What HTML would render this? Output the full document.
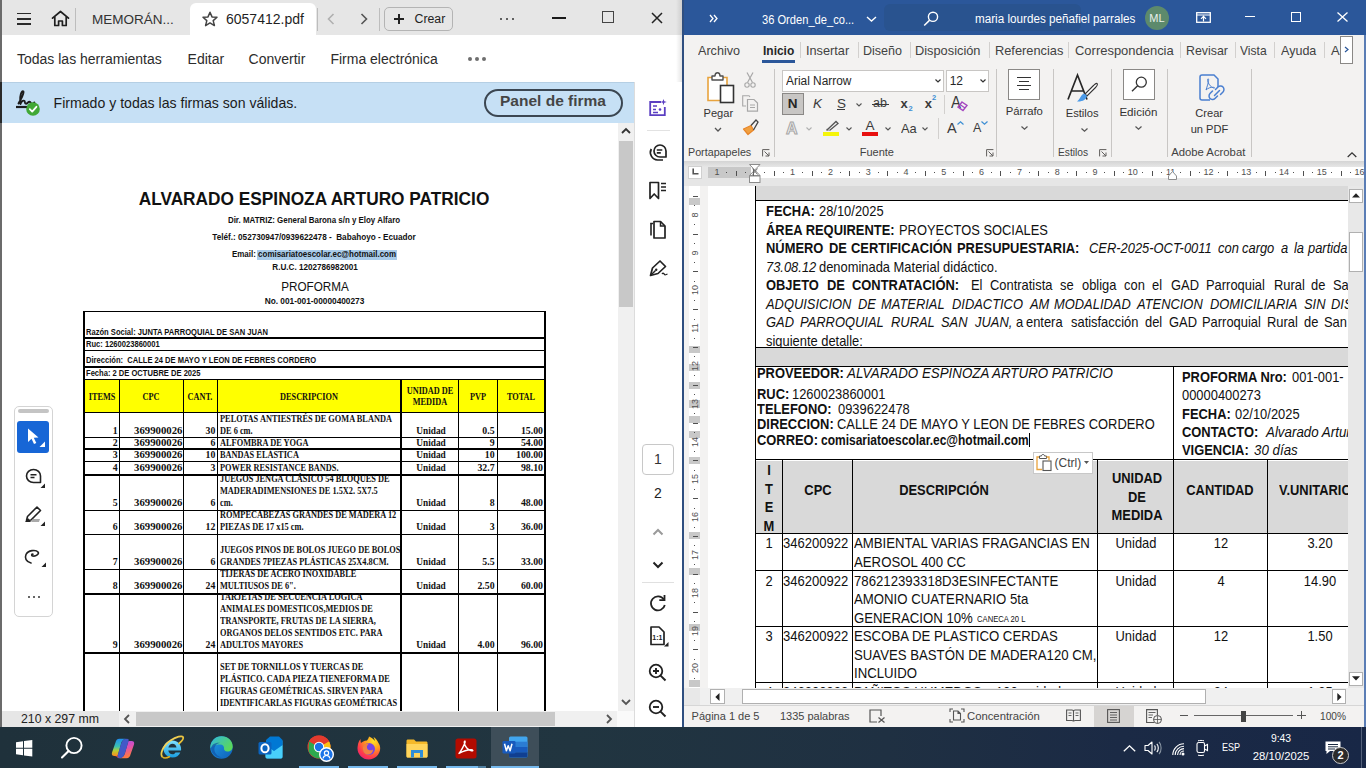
<!DOCTYPE html>
<html><head><meta charset="utf-8">
<style>
*{box-sizing:border-box;margin:0;padding:0}
html,body{width:1366px;height:768px;overflow:hidden;background:#fff;font-family:"Liberation Sans",sans-serif;position:relative}
.a{position:absolute}
.t{position:absolute;white-space:nowrap;line-height:1}
svg{position:absolute;overflow:visible}
#L{position:absolute;left:0;top:0;width:682px;height:727px;background:#fff;overflow:hidden}
#R{position:absolute;left:682px;top:0;width:684px;height:727px;background:#f3f2f1;overflow:hidden}
#TB{position:absolute;left:0;top:727px;width:1366px;height:41px;background:#1d2c39;overflow:hidden}
</style></head><body>
<div id="L">
<div class="a" style="left:0px;top:0px;width:682px;height:35px;background:#e6e6e6;"></div>
<div class="a" style="left:190px;top:3px;width:126px;height:32px;background:#fff;border-radius:6px 6px 0 0"></div>
<div class="a" style="left:0px;top:35px;width:682px;height:47px;background:#fff;"></div>
<div class="a" style="left:0px;top:82px;width:634px;height:41px;background:#c6e0f5;"></div>
<div class="a" style="left:0px;top:82px;width:634px;height:1px;background:#b5cfe4;"></div>
<div class="a" style="left:0px;top:0px;width:2px;height:727px;background:#6b6b6b;"></div>
<div class="a" style="left:0px;top:82px;width:2px;height:41px;background:#2a2a2a;"></div>
<div class="a" style="left:676px;top:0;width:6px;height:727px;background:linear-gradient(to right,rgba(0,0,0,0),rgba(0,0,0,0.10))"></div>
<div class="a" style="left:17px;top:12.75px;width:14px;height:1.6px;background:#2b2b2b;"></div>
<div class="a" style="left:17px;top:18.0px;width:14px;height:1.6px;background:#2b2b2b;"></div>
<div class="a" style="left:17px;top:23.25px;width:14px;height:1.6px;background:#2b2b2b;"></div>
<svg style="left:51px;top:10px" width="19" height="17" viewBox="0 0 19 17"><path d="M1.5 8.2 L9.5 1.5 L17.5 8.2 M3.8 6.6 V15.5 H7.6 V11 H11.4 V15.5 H15.2 V6.6" fill="none" stroke="#1f1f1f" stroke-width="1.7" stroke-linejoin="round" stroke-linecap="round"/></svg>
<div class="a" style="left:75px;top:8px;width:1px;height:23px;background:#bdbdbd;"></div>
<span class="t" style="left:92px;top:12.77px;font-size:13.5px;color:#333;">MEMORÁN...</span>
<svg style="left:202px;top:11px" width="16" height="16" viewBox="0 0 16 16"><path d="M8 1.2 L10 5.9 L15 6.3 L11.2 9.6 L12.4 14.6 L8 11.9 L3.6 14.6 L4.8 9.6 L1 6.3 L6 5.9 Z" fill="none" stroke="#444" stroke-width="1.5" stroke-linejoin="round"/></svg>
<span class="t" style="left:226px;top:12.35px;font-size:14px;color:#1f1f1f;">6057412.pdf</span>
<div class="a" style="left:317px;top:8px;width:1px;height:23px;background:#bdbdbd;"></div>
<svg style="left:327px;top:13px" width="8" height="12" viewBox="0 0 8 12"><path d="M6.5 1 L1.5 6 L6.5 11" fill="none" stroke="#b0b0b0" stroke-width="1.6"/></svg>
<svg style="left:360px;top:13px" width="8" height="12" viewBox="0 0 8 12"><path d="M1.5 1 L6.5 6 L1.5 11" fill="none" stroke="#555" stroke-width="1.6"/></svg>
<div class="a" style="left:379px;top:8px;width:1px;height:23px;background:#bdbdbd;"></div>
<div class="a" style="left:384px;top:7px;width:69px;height:24px;border:1px solid #b4b4b4;border-radius:5px"></div>
<div class="a" style="left:394px;top:18.2px;width:10px;height:1.6px;background:#222;"></div>
<div class="a" style="left:398.2px;top:14px;width:1.6px;height:10px;background:#222;"></div>
<span class="t" style="left:414.5px;top:12.79px;font-size:12.3px;color:#222;">Crear</span>
<div class="a" style="left:499.5px;top:17.5px;width:2px;height:2px;background:#333;border-radius:1px;"></div>
<div class="a" style="left:505.5px;top:17.5px;width:2px;height:2px;background:#333;border-radius:1px;"></div>
<div class="a" style="left:511.5px;top:17.5px;width:2px;height:2px;background:#333;border-radius:1px;"></div>
<div class="a" style="left:552px;top:17px;width:14px;height:2px;background:#1a1a1a;"></div>
<div class="a" style="left:602px;top:11px;width:12px;height:12px;border:1.6px solid #444"></div>
<svg style="left:651px;top:11.5px" width="12" height="12" viewBox="0 0 12 12"><path d="M1 1 L11 11 M11 1 L1 11" stroke="#222" stroke-width="1.5"/></svg>
<span class="t" style="left:17px;top:51.95px;font-size:14px;color:#2c2c2c;">Todas las herramientas</span>
<span class="t" style="left:187.6px;top:51.95px;font-size:14px;color:#2c2c2c;">Editar</span>
<span class="t" style="left:248.6px;top:51.95px;font-size:14px;color:#2c2c2c;">Convertir</span>
<span class="t" style="left:330.4px;top:51.95px;font-size:14px;color:#2c2c2c;">Firma electrónica</span>
<div class="a" style="left:468px;top:56.7px;width:4px;height:4px;background:#6e6e6e;border-radius:2px;"></div>
<div class="a" style="left:475px;top:56.7px;width:4px;height:4px;background:#6e6e6e;border-radius:2px;"></div>
<div class="a" style="left:482px;top:56.7px;width:4px;height:4px;background:#6e6e6e;border-radius:2px;"></div>
<svg style="left:14px;top:89px" width="30" height="28" viewBox="0 0 30 28"><path d="M4.5 14.5 C6.5 11 9.5 5.5 9.5 3.2 C9.5 1.8 8.3 2 7.5 3.5 C6.2 6 6 11 6.5 15 C7.2 12.5 8.8 11.2 10.3 11.8 C11.6 12.3 10 14.8 12 14.8 C13.5 14.8 14.2 12.3 15.8 12.8 C17.2 13.3 16.2 15 18.2 14.8 C19.2 14.7 19.8 14 20.3 13.5" fill="none" stroke="#1d1d1d" stroke-width="1.9" stroke-linecap="round" stroke-linejoin="round"/><path d="M2 18 H20" stroke="#1d1d1d" stroke-width="2.2"/><circle cx="19" cy="20" r="6.8" fill="#41a835"/><path d="M15.8 20.2 L18.2 22.6 L22.4 17.8" fill="none" stroke="#fff" stroke-width="1.8" stroke-linecap="round" stroke-linejoin="round"/></svg>
<span class="t" style="left:53.6px;top:96.06px;font-size:14.1px;color:#1b1b1b;">Firmado y todas las firmas son válidas.</span>
<div class="a" style="left:484px;top:89px;width:139px;height:28px;border:2px solid #3b4651;border-radius:14px"></div>
<span class="t" style="left:553px;top:93.48px;font-size:15.5px;font-weight:bold;color:#454545;transform:translateX(-50%) scaleX(1.0);transform-origin:50% 0;">Panel de firma</span>
<div class="a" style="left:634px;top:82px;width:48px;height:645px;background:#fff;"></div>
<div class="a" style="left:634px;top:82px;width:1px;height:645px;background:#dcdcdc;"></div>
<svg style="left:648px;top:98px" width="20" height="19" viewBox="0 0 20 19"><path d="M13 4 H2.2 V17.2 H16.8 V9" fill="none" stroke="#5b3fc2" stroke-width="1.8"/><path d="M5 8 H9 M5 11.5 H8 M5 14.5 H10" stroke="#5b3fc2" stroke-width="1.6"/><circle cx="12" cy="11.5" r="1.3" fill="#5b3fc2"/><path d="M15.5 1 L16.3 3.3 L18.8 4 L16.3 4.8 L15.5 7.2 L14.7 4.8 L12.3 4 L14.7 3.3 Z" fill="#5b3fc2"/></svg>
<div class="a" style="left:647px;top:130px;width:23px;height:1px;background:#e2e2e2;"></div>
<svg style="left:648px;top:143px" width="20" height="19" viewBox="0 0 20 19"><path d="M12 2 A6 6 0 1 0 12 14 H18 V8 A6 6 0 0 0 12 2 Z" fill="none" stroke="#222" stroke-width="1.7" stroke-linejoin="round"/><path d="M8.8 7 H14.3 M8.8 9.9 H12.8" stroke="#222" stroke-width="1.6"/><path d="M3.3 6 A7.5 7.5 0 0 0 9.5 17 H15" fill="none" stroke="#222" stroke-width="1.7"/></svg>
<svg style="left:648px;top:181px" width="20" height="19" viewBox="0 0 20 19"><path d="M2 1.5 H10.5 V17.5 L6.2 13 L2 17.5 Z" fill="none" stroke="#222" stroke-width="1.7" stroke-linejoin="round"/><path d="M13 2.5 H18 M13 6 H18 M13 9.5 H18" stroke="#222" stroke-width="1.5"/></svg>
<svg style="left:648px;top:220px" width="20" height="19" viewBox="0 0 20 19"><path d="M5 3.5 H3 V15.5" fill="none" stroke="#222" stroke-width="1.6"/><path d="M3 3.5 V4 M6 1.5 H12.5 L17 6 V18 H6 Z" fill="none" stroke="#222" stroke-width="1.7" stroke-linejoin="round"/><path d="M12.5 1.5 V6 H17" fill="none" stroke="#222" stroke-width="1.5"/></svg>
<svg style="left:648px;top:259px" width="21" height="19" viewBox="0 0 21 19"><path d="M12 2 L17.5 7.5 L10 14.5 L2.5 16.5 L4.5 9 Z" fill="none" stroke="#222" stroke-width="1.7" stroke-linejoin="round"/><path d="M2.5 16.5 L7.5 11.5" stroke="#222" stroke-width="1.5"/><circle cx="8.2" cy="10.8" r="1.2" fill="#222"/><path d="M14 15 C15 13.5 16 14.5 16.5 15.5 C17 16.5 18 15.5 19.5 15" fill="none" stroke="#222" stroke-width="1.3"/></svg>
<div class="a" style="left:642px;top:444px;width:32px;height:31px;border:1px solid #c8c8c8;border-radius:4px"></div>
<span class="t" style="left:658px;top:451.65px;font-size:14px;color:#333;transform:translateX(-50%) scaleX(1.0);transform-origin:50% 0;">1</span>
<span class="t" style="left:658px;top:486.15px;font-size:14px;color:#222;transform:translateX(-50%) scaleX(1.0);transform-origin:50% 0;">2</span>
<svg style="left:652px;top:528px" width="12" height="8" viewBox="0 0 12 8"><path d="M1.5 6.5 L6 2 L10.5 6.5" fill="none" stroke="#9a9a9a" stroke-width="2"/></svg>
<svg style="left:652px;top:561px" width="12" height="8" viewBox="0 0 12 8"><path d="M1.5 1.5 L6 6 L10.5 1.5" fill="none" stroke="#222" stroke-width="2"/></svg>
<div class="a" style="left:642px;top:582px;width:32px;height:1px;background:#e0e0e0;"></div>
<svg style="left:648px;top:593px" width="20" height="20" viewBox="0 0 20 20"><path d="M15.8 6.5 A7 7 0 1 0 16.8 12" fill="none" stroke="#222" stroke-width="1.8"/><path d="M16.5 2 V7.2 H11.3" fill="none" stroke="#222" stroke-width="1.8"/></svg>
<svg style="left:649px;top:626px" width="20" height="21" viewBox="0 0 20 21"><path d="M2 1 H10 L15 6 V18.5 H2 Z" fill="none" stroke="#222" stroke-width="1.7" stroke-linejoin="round"/><text x="3.3" y="14" font-family="Liberation Sans" font-size="7" font-weight="bold" fill="#222">1:1</text><path d="M19.5 16 V20.5 H15 Z" fill="#222"/></svg>
<svg style="left:648px;top:663px" width="20" height="20" viewBox="0 0 20 20"><circle cx="8" cy="8" r="6.3" fill="none" stroke="#222" stroke-width="1.8"/><path d="M12.6 12.6 L17.5 17.5" stroke="#222" stroke-width="2"/><path d="M5 8 H11 M8 5 V11" stroke="#222" stroke-width="1.9"/></svg>
<svg style="left:648px;top:699px" width="20" height="20" viewBox="0 0 20 20"><circle cx="8" cy="8" r="6.3" fill="none" stroke="#222" stroke-width="1.8"/><path d="M12.6 12.6 L17.5 17.5" stroke="#222" stroke-width="2"/><path d="M5 8 H11" stroke="#222" stroke-width="1.9"/></svg>
<div class="a" style="left:618px;top:123px;width:16px;height:588px;background:#f0f0f0;"></div>
<svg style="left:621px;top:127px" width="10" height="8" viewBox="0 0 10 8"><path d="M1 6 L5 2 L9 6" fill="none" stroke="#333" stroke-width="1.8"/></svg>
<div class="a" style="left:619px;top:140.5px;width:14px;height:166px;background:#c8c8c8;"></div>
<svg style="left:621px;top:698px" width="10" height="8" viewBox="0 0 10 8"><path d="M1 2 L5 6 L9 2" fill="none" stroke="#555" stroke-width="1.8"/></svg>
<div class="a" style="left:2px;top:711px;width:615px;height:16px;background:#f0f0f0;"></div>
<div class="a" style="left:2px;top:711px;width:117px;height:16px;background:#e6e6e6;"></div>
<span class="t" style="left:21px;top:712.99px;font-size:12.3px;color:#222;">210 x 297 mm</span>
<svg style="left:123px;top:714px" width="8" height="10" viewBox="0 0 8 10"><path d="M6 1 L2 5 L6 9" fill="none" stroke="#555" stroke-width="1.8"/></svg>
<div class="a" style="left:136px;top:712px;width:419px;height:14px;background:#c8c8c8;"></div>
<svg style="left:605px;top:714px" width="8" height="10" viewBox="0 0 8 10"><path d="M2 1 L6 5 L2 9" fill="none" stroke="#555" stroke-width="1.8"/></svg>
<div class="a" style="left:617px;top:711px;width:17px;height:16px;background:#fafafa;"></div>
<div class="a" style="left:2px;top:123px;width:616px;height:588px;overflow:hidden"><div class="a" style="left:-2px;top:-123px;width:682px;height:768px"><span class="t" style="left:314px;top:190.29px;font-size:18.8px;font-weight:bold;color:#111;transform:translateX(-50%) scaleX(0.92);transform-origin:50% 0;">ALVARADO ESPINOZA ARTURO PATRICIO</span>
<span class="t" style="left:314px;top:215.87px;font-size:8.3px;font-weight:bold;color:#111;transform:translateX(-50%) scaleX(0.955);transform-origin:50% 0;">Dir. MATRIZ: General Barona s/n y Eloy Alfaro</span>
<span class="t" style="left:314.4px;top:232.67px;font-size:8.3px;font-weight:bold;color:#111;transform:translateX(-50%) scaleX(0.985);transform-origin:50% 0;">Teléf.: 052730947/0939622478 -&nbsp; Babahoyo - Ecuador</span>
<div class="a" style="left:256.5px;top:249.5px;width:140.5px;height:10px;background:#a9cbe9;"></div>
<span class="t" style="left:314px;top:249.57px;font-size:8.3px;font-weight:bold;color:#111;transform:translateX(-50%) scaleX(0.96);transform-origin:50% 0;">Email: comisariatoescolar.ec@hotmail.com</span>
<span class="t" style="left:314.8px;top:262.57px;font-size:8.3px;font-weight:bold;color:#111;transform:translateX(-50%) scaleX(0.98);transform-origin:50% 0;">R.U.C. 1202786982001</span>
<span class="t" style="left:315px;top:280.40px;font-size:13px;color:#111;transform:translateX(-50%) scaleX(0.9);transform-origin:50% 0;">PROFORMA</span>
<span class="t" style="left:314.5px;top:296.97px;font-size:8.3px;font-weight:bold;color:#111;transform:translateX(-50%) scaleX(1.0);transform-origin:50% 0;">No. 001-001-00000400273</span>
<div class="a" style="left:83px;top:311px;width:462px;height:1.2px;background:#000;"></div>
<div class="a" style="left:83px;top:336.5px;width:462px;height:2px;background:#000;"></div>
<div class="a" style="left:83px;top:350px;width:462px;height:1px;background:#000;"></div>
<div class="a" style="left:83px;top:366px;width:462px;height:2px;background:#000;"></div>
<div class="a" style="left:83px;top:379px;width:462px;height:1.3px;background:#000;"></div>
<div class="a" style="left:83px;top:380px;width:462px;height:32px;background:#ffff00;"></div>
<div class="a" style="left:83px;top:412px;width:462px;height:1.3px;background:#000;"></div>
<div class="a" style="left:83px;top:436.5px;width:462px;height:1.2px;background:#000;"></div>
<div class="a" style="left:83px;top:448px;width:462px;height:2px;background:#000;"></div>
<div class="a" style="left:83px;top:461px;width:462px;height:1.2px;background:#000;"></div>
<div class="a" style="left:83px;top:473.5px;width:462px;height:2px;background:#000;"></div>
<div class="a" style="left:83px;top:509.5px;width:462px;height:1.2px;background:#000;"></div>
<div class="a" style="left:83px;top:533.5px;width:462px;height:1.2px;background:#000;"></div>
<div class="a" style="left:83px;top:568.5px;width:462px;height:1.2px;background:#000;"></div>
<div class="a" style="left:83px;top:593px;width:462px;height:2px;background:#000;"></div>
<div class="a" style="left:83px;top:652px;width:462px;height:2px;background:#000;"></div>
<div class="a" style="left:83px;top:311px;width:2px;height:400px;background:#000;"></div>
<div class="a" style="left:544px;top:311px;width:2px;height:400px;background:#000;"></div>
<div class="a" style="left:119px;top:379px;width:1.2px;height:332px;background:#000;"></div>
<div class="a" style="left:183px;top:379px;width:1.2px;height:332px;background:#000;"></div>
<div class="a" style="left:217.3px;top:379px;width:1.2px;height:332px;background:#000;"></div>
<div class="a" style="left:400px;top:379px;width:1.6px;height:332px;background:#000;"></div>
<div class="a" style="left:458px;top:379px;width:1.2px;height:332px;background:#000;"></div>
<div class="a" style="left:496.5px;top:379px;width:1.6px;height:332px;background:#000;"></div>
<span class="t" style="left:86px;top:329.06px;font-size:8.2px;font-weight:bold;color:#111;transform:scaleX(0.925);transform-origin:0 0;">Razón Social: JUNTA PARROQUIAL DE SAN JUAN</span>
<span class="t" style="left:86px;top:341.36px;font-size:8.2px;font-weight:bold;color:#111;transform:scaleX(0.925);transform-origin:0 0;">Ruc: 1260023860001</span>
<span class="t" style="left:86px;top:357.36px;font-size:8.2px;font-weight:bold;color:#111;transform:scaleX(0.925);transform-origin:0 0;">Dirección:&nbsp; CALLE 24 DE MAYO Y LEON DE FEBRES CORDERO</span>
<span class="t" style="left:86px;top:369.96px;font-size:8.2px;font-weight:bold;color:#111;transform:scaleX(0.925);transform-origin:0 0;">Fecha: 2 DE OCTUBRE DE 2025</span>
<span class="t" style="left:101.5px;top:391.96px;font-size:9.6px;font-weight:bold;color:#111;font-family:'Liberation Serif',serif;transform:translateX(-50%) scaleX(0.86);transform-origin:50% 0;">ITEMS</span>
<span class="t" style="left:151px;top:391.96px;font-size:9.6px;font-weight:bold;color:#111;font-family:'Liberation Serif',serif;transform:translateX(-50%) scaleX(0.86);transform-origin:50% 0;">CPC</span>
<span class="t" style="left:200.3px;top:391.96px;font-size:9.6px;font-weight:bold;color:#111;font-family:'Liberation Serif',serif;transform:translateX(-50%) scaleX(0.86);transform-origin:50% 0;">CANT.</span>
<span class="t" style="left:308.5px;top:391.96px;font-size:9.6px;font-weight:bold;color:#111;font-family:'Liberation Serif',serif;transform:translateX(-50%) scaleX(0.86);transform-origin:50% 0;">DESCRIPCION</span>
<span class="t" style="left:429.5px;top:385.96px;font-size:9.6px;font-weight:bold;color:#111;font-family:'Liberation Serif',serif;transform:translateX(-50%) scaleX(0.86);transform-origin:50% 0;">UNIDAD DE</span>
<span class="t" style="left:429.5px;top:396.96px;font-size:9.6px;font-weight:bold;color:#111;font-family:'Liberation Serif',serif;transform:translateX(-50%) scaleX(0.86);transform-origin:50% 0;">MEDIDA</span>
<span class="t" style="left:477.5px;top:391.96px;font-size:9.6px;font-weight:bold;color:#111;font-family:'Liberation Serif',serif;transform:translateX(-50%) scaleX(0.86);transform-origin:50% 0;">PVP</span>
<span class="t" style="left:520.5px;top:391.96px;font-size:9.6px;font-weight:bold;color:#111;font-family:'Liberation Serif',serif;transform:translateX(-50%) scaleX(0.86);transform-origin:50% 0;">TOTAL</span>
<span class="t" style="left:117.7px;top:425.59px;font-size:9.8px;font-weight:bold;color:#111;font-family:'Liberation Serif',serif;transform:translateX(-100%) scaleX(1.0);transform-origin:100% 0;">1</span>
<span class="t" style="left:133.8px;top:425.59px;font-size:9.8px;font-weight:bold;color:#111;font-family:'Liberation Serif',serif;transform:scaleX(1.1);transform-origin:0 0;">369900026</span>
<span class="t" style="left:215.4px;top:425.59px;font-size:9.8px;font-weight:bold;color:#111;font-family:'Liberation Serif',serif;transform:translateX(-100%) scaleX(1.0);transform-origin:100% 0;">30</span>
<span class="t" style="left:219.6px;top:413.59px;font-size:9.8px;font-weight:bold;color:#111;font-family:'Liberation Serif',serif;transform:scaleX(0.85);transform-origin:0 0;">PELOTAS ANTIESTRÉS DE GOMA BLANDA</span>
<span class="t" style="left:219.6px;top:425.59px;font-size:9.8px;font-weight:bold;color:#111;font-family:'Liberation Serif',serif;transform:scaleX(0.85);transform-origin:0 0;">DE 6 cm.</span>
<span class="t" style="left:430.5px;top:425.59px;font-size:9.8px;font-weight:bold;color:#111;font-family:'Liberation Serif',serif;transform:translateX(-50%) scaleX(0.95);transform-origin:50% 0;">Unidad</span>
<span class="t" style="left:494.6px;top:425.59px;font-size:9.8px;font-weight:bold;color:#111;font-family:'Liberation Serif',serif;transform:translateX(-100%) scaleX(1.0);transform-origin:100% 0;">0.5</span>
<span class="t" style="left:543px;top:425.59px;font-size:9.8px;font-weight:bold;color:#111;font-family:'Liberation Serif',serif;transform:translateX(-100%) scaleX(1.0);transform-origin:100% 0;">15.00</span>
<span class="t" style="left:117.7px;top:437.59px;font-size:9.8px;font-weight:bold;color:#111;font-family:'Liberation Serif',serif;transform:translateX(-100%) scaleX(1.0);transform-origin:100% 0;">2</span>
<span class="t" style="left:133.8px;top:437.59px;font-size:9.8px;font-weight:bold;color:#111;font-family:'Liberation Serif',serif;transform:scaleX(1.1);transform-origin:0 0;">369900026</span>
<span class="t" style="left:215.4px;top:437.59px;font-size:9.8px;font-weight:bold;color:#111;font-family:'Liberation Serif',serif;transform:translateX(-100%) scaleX(1.0);transform-origin:100% 0;">6</span>
<span class="t" style="left:219.6px;top:437.59px;font-size:9.8px;font-weight:bold;color:#111;font-family:'Liberation Serif',serif;transform:scaleX(0.85);transform-origin:0 0;">ALFOMBRA DE YOGA</span>
<span class="t" style="left:430.5px;top:437.59px;font-size:9.8px;font-weight:bold;color:#111;font-family:'Liberation Serif',serif;transform:translateX(-50%) scaleX(0.95);transform-origin:50% 0;">Unidad</span>
<span class="t" style="left:494.6px;top:437.59px;font-size:9.8px;font-weight:bold;color:#111;font-family:'Liberation Serif',serif;transform:translateX(-100%) scaleX(1.0);transform-origin:100% 0;">9</span>
<span class="t" style="left:543px;top:437.59px;font-size:9.8px;font-weight:bold;color:#111;font-family:'Liberation Serif',serif;transform:translateX(-100%) scaleX(1.0);transform-origin:100% 0;">54.00</span>
<span class="t" style="left:117.7px;top:449.99px;font-size:9.8px;font-weight:bold;color:#111;font-family:'Liberation Serif',serif;transform:translateX(-100%) scaleX(1.0);transform-origin:100% 0;">3</span>
<span class="t" style="left:133.8px;top:449.99px;font-size:9.8px;font-weight:bold;color:#111;font-family:'Liberation Serif',serif;transform:scaleX(1.1);transform-origin:0 0;">369900026</span>
<span class="t" style="left:215.4px;top:449.99px;font-size:9.8px;font-weight:bold;color:#111;font-family:'Liberation Serif',serif;transform:translateX(-100%) scaleX(1.0);transform-origin:100% 0;">10</span>
<span class="t" style="left:219.6px;top:449.99px;font-size:9.8px;font-weight:bold;color:#111;font-family:'Liberation Serif',serif;transform:scaleX(0.85);transform-origin:0 0;">BANDAS ELÁSTICA</span>
<span class="t" style="left:430.5px;top:449.99px;font-size:9.8px;font-weight:bold;color:#111;font-family:'Liberation Serif',serif;transform:translateX(-50%) scaleX(0.95);transform-origin:50% 0;">Unidad</span>
<span class="t" style="left:494.6px;top:449.99px;font-size:9.8px;font-weight:bold;color:#111;font-family:'Liberation Serif',serif;transform:translateX(-100%) scaleX(1.0);transform-origin:100% 0;">10</span>
<span class="t" style="left:543px;top:449.99px;font-size:9.8px;font-weight:bold;color:#111;font-family:'Liberation Serif',serif;transform:translateX(-100%) scaleX(1.0);transform-origin:100% 0;">100.00</span>
<span class="t" style="left:117.7px;top:462.59px;font-size:9.8px;font-weight:bold;color:#111;font-family:'Liberation Serif',serif;transform:translateX(-100%) scaleX(1.0);transform-origin:100% 0;">4</span>
<span class="t" style="left:133.8px;top:462.59px;font-size:9.8px;font-weight:bold;color:#111;font-family:'Liberation Serif',serif;transform:scaleX(1.1);transform-origin:0 0;">369900026</span>
<span class="t" style="left:215.4px;top:462.59px;font-size:9.8px;font-weight:bold;color:#111;font-family:'Liberation Serif',serif;transform:translateX(-100%) scaleX(1.0);transform-origin:100% 0;">3</span>
<span class="t" style="left:219.6px;top:462.59px;font-size:9.8px;font-weight:bold;color:#111;font-family:'Liberation Serif',serif;transform:scaleX(0.85);transform-origin:0 0;">POWER RESISTANCE BANDS.</span>
<span class="t" style="left:430.5px;top:462.59px;font-size:9.8px;font-weight:bold;color:#111;font-family:'Liberation Serif',serif;transform:translateX(-50%) scaleX(0.95);transform-origin:50% 0;">Unidad</span>
<span class="t" style="left:494.6px;top:462.59px;font-size:9.8px;font-weight:bold;color:#111;font-family:'Liberation Serif',serif;transform:translateX(-100%) scaleX(1.0);transform-origin:100% 0;">32.7</span>
<span class="t" style="left:543px;top:462.59px;font-size:9.8px;font-weight:bold;color:#111;font-family:'Liberation Serif',serif;transform:translateX(-100%) scaleX(1.0);transform-origin:100% 0;">98.10</span>
<span class="t" style="left:117.7px;top:497.99px;font-size:9.8px;font-weight:bold;color:#111;font-family:'Liberation Serif',serif;transform:translateX(-100%) scaleX(1.0);transform-origin:100% 0;">5</span>
<span class="t" style="left:133.8px;top:497.99px;font-size:9.8px;font-weight:bold;color:#111;font-family:'Liberation Serif',serif;transform:scaleX(1.1);transform-origin:0 0;">369900026</span>
<span class="t" style="left:215.4px;top:497.99px;font-size:9.8px;font-weight:bold;color:#111;font-family:'Liberation Serif',serif;transform:translateX(-100%) scaleX(1.0);transform-origin:100% 0;">6</span>
<span class="t" style="left:219.6px;top:473.99px;font-size:9.8px;font-weight:bold;color:#111;font-family:'Liberation Serif',serif;transform:scaleX(0.85);transform-origin:0 0;">JUEGOS JENGA CLÁSICO 54 BLOQUES DE</span>
<span class="t" style="left:219.6px;top:485.99px;font-size:9.8px;font-weight:bold;color:#111;font-family:'Liberation Serif',serif;transform:scaleX(0.85);transform-origin:0 0;">MADERADIMENSIONES DE 1.5X2. 5X7.5</span>
<span class="t" style="left:219.6px;top:497.99px;font-size:9.8px;font-weight:bold;color:#111;font-family:'Liberation Serif',serif;transform:scaleX(0.85);transform-origin:0 0;">cm.</span>
<span class="t" style="left:430.5px;top:497.99px;font-size:9.8px;font-weight:bold;color:#111;font-family:'Liberation Serif',serif;transform:translateX(-50%) scaleX(0.95);transform-origin:50% 0;">Unidad</span>
<span class="t" style="left:494.6px;top:497.99px;font-size:9.8px;font-weight:bold;color:#111;font-family:'Liberation Serif',serif;transform:translateX(-100%) scaleX(1.0);transform-origin:100% 0;">8</span>
<span class="t" style="left:543px;top:497.99px;font-size:9.8px;font-weight:bold;color:#111;font-family:'Liberation Serif',serif;transform:translateX(-100%) scaleX(1.0);transform-origin:100% 0;">48.00</span>
<span class="t" style="left:117.7px;top:522.09px;font-size:9.8px;font-weight:bold;color:#111;font-family:'Liberation Serif',serif;transform:translateX(-100%) scaleX(1.0);transform-origin:100% 0;">6</span>
<span class="t" style="left:133.8px;top:522.09px;font-size:9.8px;font-weight:bold;color:#111;font-family:'Liberation Serif',serif;transform:scaleX(1.1);transform-origin:0 0;">369900026</span>
<span class="t" style="left:215.4px;top:522.09px;font-size:9.8px;font-weight:bold;color:#111;font-family:'Liberation Serif',serif;transform:translateX(-100%) scaleX(1.0);transform-origin:100% 0;">12</span>
<span class="t" style="left:219.6px;top:510.09px;font-size:9.8px;font-weight:bold;color:#111;font-family:'Liberation Serif',serif;transform:scaleX(0.85);transform-origin:0 0;">ROMPECABEZAS GRANDES DE MADERA 12</span>
<span class="t" style="left:219.6px;top:522.09px;font-size:9.8px;font-weight:bold;color:#111;font-family:'Liberation Serif',serif;transform:scaleX(0.85);transform-origin:0 0;">PIEZAS DE 17 x15 cm.</span>
<span class="t" style="left:430.5px;top:522.09px;font-size:9.8px;font-weight:bold;color:#111;font-family:'Liberation Serif',serif;transform:translateX(-50%) scaleX(0.95);transform-origin:50% 0;">Unidad</span>
<span class="t" style="left:494.6px;top:522.09px;font-size:9.8px;font-weight:bold;color:#111;font-family:'Liberation Serif',serif;transform:translateX(-100%) scaleX(1.0);transform-origin:100% 0;">3</span>
<span class="t" style="left:543px;top:522.09px;font-size:9.8px;font-weight:bold;color:#111;font-family:'Liberation Serif',serif;transform:translateX(-100%) scaleX(1.0);transform-origin:100% 0;">36.00</span>
<span class="t" style="left:117.7px;top:557.09px;font-size:9.8px;font-weight:bold;color:#111;font-family:'Liberation Serif',serif;transform:translateX(-100%) scaleX(1.0);transform-origin:100% 0;">7</span>
<span class="t" style="left:133.8px;top:557.09px;font-size:9.8px;font-weight:bold;color:#111;font-family:'Liberation Serif',serif;transform:scaleX(1.1);transform-origin:0 0;">369900026</span>
<span class="t" style="left:215.4px;top:557.09px;font-size:9.8px;font-weight:bold;color:#111;font-family:'Liberation Serif',serif;transform:translateX(-100%) scaleX(1.0);transform-origin:100% 0;">6</span>
<span class="t" style="left:219.6px;top:545.09px;font-size:9.8px;font-weight:bold;color:#111;font-family:'Liberation Serif',serif;transform:scaleX(0.85);transform-origin:0 0;">JUEGOS PINOS DE BOLOS JUEGO DE BOLOS</span>
<span class="t" style="left:219.6px;top:557.09px;font-size:9.8px;font-weight:bold;color:#111;font-family:'Liberation Serif',serif;transform:scaleX(0.85);transform-origin:0 0;">GRANDES 7PIEZAS PLÁSTICAS 25X4.8CM.</span>
<span class="t" style="left:430.5px;top:557.09px;font-size:9.8px;font-weight:bold;color:#111;font-family:'Liberation Serif',serif;transform:translateX(-50%) scaleX(0.95);transform-origin:50% 0;">Unidad</span>
<span class="t" style="left:494.6px;top:557.09px;font-size:9.8px;font-weight:bold;color:#111;font-family:'Liberation Serif',serif;transform:translateX(-100%) scaleX(1.0);transform-origin:100% 0;">5.5</span>
<span class="t" style="left:543px;top:557.09px;font-size:9.8px;font-weight:bold;color:#111;font-family:'Liberation Serif',serif;transform:translateX(-100%) scaleX(1.0);transform-origin:100% 0;">33.00</span>
<span class="t" style="left:117.7px;top:581.09px;font-size:9.8px;font-weight:bold;color:#111;font-family:'Liberation Serif',serif;transform:translateX(-100%) scaleX(1.0);transform-origin:100% 0;">8</span>
<span class="t" style="left:133.8px;top:581.09px;font-size:9.8px;font-weight:bold;color:#111;font-family:'Liberation Serif',serif;transform:scaleX(1.1);transform-origin:0 0;">369900026</span>
<span class="t" style="left:215.4px;top:581.09px;font-size:9.8px;font-weight:bold;color:#111;font-family:'Liberation Serif',serif;transform:translateX(-100%) scaleX(1.0);transform-origin:100% 0;">24</span>
<span class="t" style="left:219.6px;top:569.09px;font-size:9.8px;font-weight:bold;color:#111;font-family:'Liberation Serif',serif;transform:scaleX(0.85);transform-origin:0 0;">TIJERAS DE ACERO INOXIDABLE</span>
<span class="t" style="left:219.6px;top:581.09px;font-size:9.8px;font-weight:bold;color:#111;font-family:'Liberation Serif',serif;transform:scaleX(0.85);transform-origin:0 0;">MULTIUSOS DE 6".</span>
<span class="t" style="left:430.5px;top:581.09px;font-size:9.8px;font-weight:bold;color:#111;font-family:'Liberation Serif',serif;transform:translateX(-50%) scaleX(0.95);transform-origin:50% 0;">Unidad</span>
<span class="t" style="left:494.6px;top:581.09px;font-size:9.8px;font-weight:bold;color:#111;font-family:'Liberation Serif',serif;transform:translateX(-100%) scaleX(1.0);transform-origin:100% 0;">2.50</span>
<span class="t" style="left:543px;top:581.09px;font-size:9.8px;font-weight:bold;color:#111;font-family:'Liberation Serif',serif;transform:translateX(-100%) scaleX(1.0);transform-origin:100% 0;">60.00</span>
<span class="t" style="left:117.7px;top:640.39px;font-size:9.8px;font-weight:bold;color:#111;font-family:'Liberation Serif',serif;transform:translateX(-100%) scaleX(1.0);transform-origin:100% 0;">9</span>
<span class="t" style="left:133.8px;top:640.39px;font-size:9.8px;font-weight:bold;color:#111;font-family:'Liberation Serif',serif;transform:scaleX(1.1);transform-origin:0 0;">369900026</span>
<span class="t" style="left:215.4px;top:640.39px;font-size:9.8px;font-weight:bold;color:#111;font-family:'Liberation Serif',serif;transform:translateX(-100%) scaleX(1.0);transform-origin:100% 0;">24</span>
<span class="t" style="left:219.6px;top:592.39px;font-size:9.8px;font-weight:bold;color:#111;font-family:'Liberation Serif',serif;transform:scaleX(0.85);transform-origin:0 0;">TARJETAS DE SECUENCIA LOGICA</span>
<span class="t" style="left:219.6px;top:604.39px;font-size:9.8px;font-weight:bold;color:#111;font-family:'Liberation Serif',serif;transform:scaleX(0.85);transform-origin:0 0;">ANIMALES DOMESTICOS,MEDIOS DE</span>
<span class="t" style="left:219.6px;top:616.39px;font-size:9.8px;font-weight:bold;color:#111;font-family:'Liberation Serif',serif;transform:scaleX(0.85);transform-origin:0 0;">TRANSPORTE, FRUTAS DE LA SIERRA,</span>
<span class="t" style="left:219.6px;top:628.39px;font-size:9.8px;font-weight:bold;color:#111;font-family:'Liberation Serif',serif;transform:scaleX(0.85);transform-origin:0 0;">ORGANOS DELOS SENTIDOS ETC. PARA</span>
<span class="t" style="left:219.6px;top:640.39px;font-size:9.8px;font-weight:bold;color:#111;font-family:'Liberation Serif',serif;transform:scaleX(0.85);transform-origin:0 0;">ADULTOS MAYORES</span>
<span class="t" style="left:430.5px;top:640.39px;font-size:9.8px;font-weight:bold;color:#111;font-family:'Liberation Serif',serif;transform:translateX(-50%) scaleX(0.95);transform-origin:50% 0;">Unidad</span>
<span class="t" style="left:494.6px;top:640.39px;font-size:9.8px;font-weight:bold;color:#111;font-family:'Liberation Serif',serif;transform:translateX(-100%) scaleX(1.0);transform-origin:100% 0;">4.00</span>
<span class="t" style="left:543px;top:640.39px;font-size:9.8px;font-weight:bold;color:#111;font-family:'Liberation Serif',serif;transform:translateX(-100%) scaleX(1.0);transform-origin:100% 0;">96.00</span>
<span class="t" style="left:219.6px;top:662.29px;font-size:9.8px;font-weight:bold;color:#111;font-family:'Liberation Serif',serif;transform:scaleX(0.85);transform-origin:0 0;">SET DE TORNILLOS Y TUERCAS DE</span>
<span class="t" style="left:219.6px;top:674.29px;font-size:9.8px;font-weight:bold;color:#111;font-family:'Liberation Serif',serif;transform:scaleX(0.85);transform-origin:0 0;">PLÁSTICO. CADA PIEZA TIENEFORMA DE</span>
<span class="t" style="left:219.6px;top:686.29px;font-size:9.8px;font-weight:bold;color:#111;font-family:'Liberation Serif',serif;transform:scaleX(0.85);transform-origin:0 0;">FIGURAS GEOMÉTRICAS. SIRVEN PARA</span>
<span class="t" style="left:219.6px;top:698.29px;font-size:9.8px;font-weight:bold;color:#111;font-family:'Liberation Serif',serif;transform:scaleX(0.85);transform-origin:0 0;">IDENTIFICARLAS FIGURAS GEOMÉTRICAS</span>
</div></div><div class="a" style="left:13.5px;top:405.5px;width:39.5px;height:211px;background:#fff;border:1px solid #d4d4d4;border-radius:5px"></div>
<div class="a" style="left:17.5px;top:408.5px;width:31px;height:4px;background:#c4c4c4;border-radius:2px;"></div>
<div class="a" style="left:17px;top:421px;width:32px;height:31.5px;background:#1766d6;border-radius:3px;"></div>
<svg style="left:26px;top:427px" width="20" height="22" viewBox="0 0 20 22"><path d="M2 1.5 V15 L5.5 11.8 L8 17 L10.3 16 L7.8 10.8 L12.5 10.5 Z" fill="#fff"/><path d="M19 14.5 V20 H13.5 Z" fill="#fff"/></svg>
<svg style="left:24px;top:467px" width="22" height="22" viewBox="0 0 22 22"><path d="M9.5 2.5 C5.5 2.5 2.5 5.5 2.5 9 C2.5 12.5 5.5 15.5 9.5 15.5 H16.5 V9 C16.5 5.5 13.5 2.5 9.5 2.5 Z" fill="none" stroke="#222" stroke-width="1.6" stroke-linejoin="round"/><path d="M6.5 7.8 H12.5 M6.5 10.6 H10.5" stroke="#222" stroke-width="1.5"/><path d="M21 16.5 V21 H16.5 Z" fill="#222"/></svg>
<svg style="left:22px;top:505px" width="24" height="22" viewBox="0 0 24 22"><path d="M15 2 L18.5 5.5 L9 15 L4.5 15.5 L5.5 11.5 Z" fill="none" stroke="#222" stroke-width="1.6" stroke-linejoin="round"/><path d="M3 17 L9 17 L6 13 Z" fill="#222"/><path d="M9 17 H17 L18 14 H11 Z" fill="#aaa"/><path d="M23 16.5 V21 H18.5 Z" fill="#222"/></svg>
<svg style="left:23px;top:546px" width="24" height="22" viewBox="0 0 24 22"><path d="M8 17 C3 16 1.5 12 3 8.5 C5 4 13 3.5 15 6 C16.5 8 13 10.5 10 10 C8 9.8 8.5 8 10 8.2" fill="none" stroke="#222" stroke-width="1.6" stroke-linecap="round"/><path d="M23 16.5 V21 H18.5 Z" fill="#222"/></svg>
<div class="a" style="left:27.5px;top:596px;width:2px;height:2px;background:#333;border-radius:1px;"></div>
<div class="a" style="left:32.5px;top:596px;width:2px;height:2px;background:#333;border-radius:1px;"></div>
<div class="a" style="left:37.5px;top:596px;width:2px;height:2px;background:#333;border-radius:1px;"></div>

</div>
<div id="R">
<div class="a" style="left:-682px;top:0;width:1366px;height:727px">
<div class="a" style="left:682px;top:0px;width:684px;height:35px;background:#2b579a;"></div>
<div class="a" style="left:682px;top:35px;width:684px;height:126px;background:#f3f2f1;"></div>
<div class="a" style="left:682px;top:0px;width:2px;height:727px;background:#2f4f80;"></div>
<div class="a" style="left:1364px;top:35px;width:2px;height:692px;background:#5a7db5;"></div>
<div class="a" style="left:884px;top:4px;width:197px;height:27px;border-radius:6px;background:#29538f"></div>
<svg style="left:709px;top:14px" width="9" height="9" viewBox="0 0 9 9"><path d="M1 1 L4 4.5 L1 8 M5 1 L8 4.5 L5 8" fill="none" stroke="#fff" stroke-width="1.3"/></svg>
<span class="t" style="left:762px;top:14.04px;font-size:12px;color:#fff;transform:scaleX(0.927);transform-origin:0 0;">36 Orden_de_co...</span>
<svg style="left:866px;top:16px" width="11" height="6" viewBox="0 0 11 6"><path d="M1 1 L5.5 5 L10 1" fill="none" stroke="#fff" stroke-width="1.4"/></svg>
<svg style="left:923px;top:11px" width="16" height="15" viewBox="0 0 16 15"><circle cx="10" cy="5.8" r="4.6" fill="none" stroke="#fff" stroke-width="1.4"/><path d="M6.7 9.1 L1.2 14.5" stroke="#fff" stroke-width="1.5"/></svg>
<span class="t" style="left:975.4px;top:13.04px;font-size:12px;color:#fff;transform:scaleX(0.973);transform-origin:0 0;">maria lourdes peñafiel parrales</span>
<div class="a" style="left:1145px;top:6px;width:24px;height:24px;border-radius:12px;background:#5d8a6c"></div>
<span class="t" style="left:1157px;top:12.99px;font-size:11px;color:#e8f0ea;transform:translateX(-50%) scaleX(1.0);transform-origin:50% 0;">ML</span>
<svg style="left:1196px;top:12px" width="15" height="11" viewBox="0 0 15 11"><rect x="0.7" y="0.7" width="13.6" height="9.6" fill="none" stroke="#fff" stroke-width="1.3"/><path d="M0.7 3 H14.3 M7.5 9.5 V4.5 M5 6.8 L7.5 4.3 L10 6.8" fill="none" stroke="#fff" stroke-width="1.2"/></svg>
<div class="a" style="left:1245px;top:16px;width:10px;height:1.3px;background:#fff;"></div>
<div class="a" style="left:1291px;top:12px;width:10px;height:10px;border:1.3px solid #fff"></div>
<svg style="left:1337px;top:12px" width="11" height="10" viewBox="0 0 11 10"><path d="M0.5 0.5 L10.5 9.5 M10.5 0.5 L0.5 9.5" stroke="#fff" stroke-width="1.3"/></svg>
<span class="t" style="left:698.3px;top:43.90px;font-size:13px;color:#424242;transform:scaleX(0.97);transform-origin:0 0;">Archivo</span>
<span class="t" style="left:762.5px;top:43.90px;font-size:13px;font-weight:bold;color:#262626;transform:scaleX(0.92);transform-origin:0 0;">Inicio</span>
<div class="a" style="left:762px;top:60px;width:33px;height:3px;background:#2b579a;"></div>
<span class="t" style="left:806.4px;top:43.90px;font-size:13px;color:#424242;transform:scaleX(0.98);transform-origin:0 0;">Insertar</span>
<span class="t" style="left:863.3px;top:43.90px;font-size:13px;color:#424242;transform:scaleX(0.965);transform-origin:0 0;">Diseño</span>
<span class="t" style="left:915.2px;top:43.90px;font-size:13px;color:#424242;transform:scaleX(0.985);transform-origin:0 0;">Disposición</span>
<span class="t" style="left:994.6px;top:43.90px;font-size:13px;color:#424242;transform:scaleX(0.985);transform-origin:0 0;">Referencias</span>
<span class="t" style="left:1074.5px;top:43.90px;font-size:13px;color:#424242;transform:scaleX(0.997);transform-origin:0 0;">Correspondencia</span>
<span class="t" style="left:1186px;top:43.90px;font-size:13px;color:#424242;transform:scaleX(0.95);transform-origin:0 0;">Revisar</span>
<span class="t" style="left:1240.3px;top:43.90px;font-size:13px;color:#424242;transform:scaleX(0.93);transform-origin:0 0;">Vista</span>
<span class="t" style="left:1280.9px;top:43.90px;font-size:13px;color:#424242;transform:scaleX(0.965);transform-origin:0 0;">Ayuda</span>
<span class="t" style="left:1331px;top:43.90px;font-size:13px;color:#424242;">A</span>
<div class="a" style="left:799.8px;top:42px;width:1px;height:16px;background:#d2d0ce;"></div>
<div class="a" style="left:857.8px;top:42px;width:1px;height:16px;background:#d2d0ce;"></div>
<div class="a" style="left:909.5px;top:42px;width:1px;height:16px;background:#d2d0ce;"></div>
<div class="a" style="left:988.7px;top:42px;width:1px;height:16px;background:#d2d0ce;"></div>
<div class="a" style="left:1067.6px;top:42px;width:1px;height:16px;background:#d2d0ce;"></div>
<div class="a" style="left:1180.3px;top:42px;width:1px;height:16px;background:#d2d0ce;"></div>
<div class="a" style="left:1234.8px;top:42px;width:1px;height:16px;background:#d2d0ce;"></div>
<div class="a" style="left:1274px;top:42px;width:1px;height:16px;background:#d2d0ce;"></div>
<div class="a" style="left:1324px;top:42px;width:1px;height:16px;background:#d2d0ce;"></div>
<div class="a" style="left:1340px;top:36px;width:13px;height:28px;background:#fff;border:1px solid #8a8886"></div>
<svg style="left:1344px;top:46px" width="5" height="7" viewBox="0 0 5 7"><path d="M1 1 L4 3.5 L1 6" fill="none" stroke="#2b579a" stroke-width="1.2"/></svg>
<svg style="left:706px;top:72px" width="30" height="32" viewBox="0 0 30 32"><path d="M7 5.5 H2 V28.5 H21 V5.5 H16" fill="#fff" stroke="#e8a33d" stroke-width="1.6"/><path d="M6 8 V4 H9 C9 1.5 10.2 0.8 11.5 0.8 C12.8 0.8 14 1.5 14 4 H17 V8 Z" fill="#fff" stroke="#505050" stroke-width="1.4" stroke-linejoin="round"/><rect x="14.5" y="13.5" width="13" height="17" fill="#fff" stroke="#333" stroke-width="1.6"/></svg>
<span class="t" style="left:703.5px;top:108.30px;font-size:11.1px;color:#333;">Pegar</span>
<svg style="left:714px;top:127px" width="8" height="5" viewBox="0 0 8 5"><path d="M1 1 L4 4 L7 1" fill="none" stroke="#555" stroke-width="1.3"/></svg>
<svg style="left:744px;top:72px" width="12" height="16" viewBox="0 0 12 16"><path d="M3 0.5 L8.5 10.5 M9 0.5 L3.5 10.5" stroke="#a8a8a8" stroke-width="1.2"/><circle cx="3" cy="13" r="2.2" fill="none" stroke="#a8a8a8" stroke-width="1.1"/><circle cx="9" cy="13" r="2.2" fill="none" stroke="#a8a8a8" stroke-width="1.1"/></svg>
<svg style="left:742px;top:95px" width="17" height="17" viewBox="0 0 17 17"><path d="M4 11 H0.7 V0.7 H7 L8 2" fill="none" stroke="#a8a8a8" stroke-width="1.1"/><path d="M5.5 4.5 H12 L15.5 8 V16.2 H5.5 Z" fill="none" stroke="#a8a8a8" stroke-width="1.2"/><path d="M8 10 H13 M8 12.5 H13" stroke="#a8a8a8" stroke-width="1"/></svg>
<svg style="left:742px;top:119px" width="17" height="16" viewBox="0 0 17 16"><path d="M1.5 10 L9 6.5 L11.5 11 L6 15.5 Z" fill="#f0a040" stroke="#e8862a" stroke-width="1.2" stroke-linejoin="round"/><path d="M9 6.5 L14 1 L16 3 L11.5 11" fill="none" stroke="#444" stroke-width="1.3"/></svg>
<span class="t" style="left:688px;top:147.09px;font-size:11px;color:#424242;transform:scaleX(0.975);transform-origin:0 0;">Portapapeles</span>
<svg style="left:762px;top:149px" width="8" height="8" viewBox="0 0 8 8"><path d="M0.6 7.4 V0.6 H7.4" fill="none" stroke="#605e5c" stroke-width="1"/><path d="M2.5 2.5 L7 7 M3.5 7 H7 V3.5" fill="none" stroke="#605e5c" stroke-width="1"/></svg>
<div class="a" style="left:773.6px;top:69px;width:1px;height:88px;background:#c8c6c4;"></div>
<div class="a" style="left:996.3px;top:69px;width:1px;height:88px;background:#c8c6c4;"></div>
<div class="a" style="left:1052.7px;top:69px;width:1px;height:88px;background:#c8c6c4;"></div>
<div class="a" style="left:1110.6px;top:69px;width:1px;height:88px;background:#c8c6c4;"></div>
<div class="a" style="left:1167.3px;top:69px;width:1px;height:88px;background:#c8c6c4;"></div>
<div class="a" style="left:1251.3px;top:69px;width:1px;height:88px;background:#c8c6c4;"></div>
<div class="a" style="left:782px;top:69.5px;width:162px;height:22px;background:#fff;border:1px solid #c8c6c4"></div>
<span class="t" style="left:785.5px;top:74.64px;font-size:12px;color:#262626;transform:scaleX(0.99);transform-origin:0 0;">Arial Narrow</span>
<svg style="left:935px;top:79px" width="6" height="4" viewBox="0 0 6 4"><path d="M0.5 0.5 L3 3 L5.5 0.5" fill="none" stroke="#333" stroke-width="1.2"/></svg>
<div class="a" style="left:946px;top:69.5px;width:43px;height:22px;background:#fff;border:1px solid #c8c6c4"></div>
<span class="t" style="left:949.7px;top:74.64px;font-size:12px;color:#262626;">12</span>
<svg style="left:979.5px;top:79px" width="6" height="4" viewBox="0 0 6 4"><path d="M0.5 0.5 L3 3 L5.5 0.5" fill="none" stroke="#333" stroke-width="1.2"/></svg>
<div class="a" style="left:782px;top:93.3px;width:22px;height:22px;background:#c8c6c4;border:1px solid #8a8886"></div>
<span class="t" style="left:787.8px;top:96.77px;font-size:13.5px;font-weight:bold;color:#252525;">N</span>
<span class="t" style="left:813px;top:96.77px;font-size:13.5px;font-style:italic;color:#3b3b3b;">K</span>
<span class="t" style="left:837px;top:96.57px;font-size:13.5px;color:#3b3b3b;">S</span>
<div class="a" style="left:837px;top:109.3px;width:8px;height:1.2px;background:#3b3b3b;"></div>
<svg style="left:855.5px;top:103px" width="6" height="4" viewBox="0 0 6 4"><path d="M0.5 0.5 L3 3 L5.5 0.5" fill="none" stroke="#555" stroke-width="1.1"/></svg>
<span class="t" style="left:873px;top:97.02px;font-size:12.5px;color:#3b3b3b;">ab</span>
<div class="a" style="left:871.5px;top:104.3px;width:17px;height:1px;background:#3b3b3b;"></div>
<span class="t" style="left:900.6px;top:97.20px;font-size:13px;font-weight:bold;color:#3b3b3b;">x</span>
<span class="t" style="left:908.5px;top:105.15px;font-size:7.5px;font-weight:bold;color:#3d8fd4;">2</span>
<span class="t" style="left:924.7px;top:97.20px;font-size:13px;font-weight:bold;color:#3b3b3b;">x</span>
<span class="t" style="left:932px;top:93.85px;font-size:7.5px;font-weight:bold;color:#3d8fd4;">2</span>
<div class="a" style="left:943.6px;top:94.6px;width:1px;height:19.4px;background:#d2d0ce;"></div>
<span class="t" style="left:951px;top:94.03px;font-size:16.5px;color:#3b3b3b;transform:scaleX(0.9);transform-origin:0 0;">A</span>
<svg style="left:957px;top:101px" width="11" height="10" viewBox="0 0 11 10"><path d="M5 1 L10 4.5 L6 9.5 L1 6 Z" fill="none" stroke="#a345c0" stroke-width="1.4"/><path d="M3 3.5 L8 7" stroke="#a345c0" stroke-width="1.2"/></svg>
<span class="t" style="left:786px;top:120.76px;font-size:16px;font-weight:bold;color:#f3f2f1;-webkit-text-stroke:1px #a6a6a6;">A</span>
<svg style="left:806px;top:127px" width="6" height="4" viewBox="0 0 6 4"><path d="M0.5 0.5 L3 3 L5.5 0.5" fill="none" stroke="#b0b0b0" stroke-width="1.1"/></svg>
<svg style="left:823px;top:120px" width="16" height="11" viewBox="0 0 16 11"><path d="M4 10 L13 1.5 L15 3.5 L6.5 10.5" fill="none" stroke="#555" stroke-width="1.3"/><path d="M3 10.5 L6 10.5 L4 8.5 Z" fill="#555"/></svg>
<div class="a" style="left:822.8px;top:132px;width:16.3px;height:4px;background:#f5f50a;"></div>
<svg style="left:846px;top:127px" width="6" height="4" viewBox="0 0 6 4"><path d="M0.5 0.5 L3 3 L5.5 0.5" fill="none" stroke="#555" stroke-width="1.1"/></svg>
<span class="t" style="left:865.5px;top:119.07px;font-size:13.5px;color:#3b3b3b;">A</span>
<div class="a" style="left:862.3px;top:132.3px;width:15.7px;height:3.3px;background:#e81010;"></div>
<svg style="left:885px;top:127px" width="6" height="4" viewBox="0 0 6 4"><path d="M0.5 0.5 L3 3 L5.5 0.5" fill="none" stroke="#555" stroke-width="1.1"/></svg>
<span class="t" style="left:901.2px;top:121.57px;font-size:13.5px;color:#3b3b3b;transform:scaleX(0.95);transform-origin:0 0;">Aa</span>
<svg style="left:922px;top:127px" width="6" height="4" viewBox="0 0 6 4"><path d="M0.5 0.5 L3 3 L5.5 0.5" fill="none" stroke="#555" stroke-width="1.1"/></svg>
<div class="a" style="left:938.4px;top:118px;width:1px;height:21px;background:#d2d0ce;"></div>
<span class="t" style="left:947px;top:120.73px;font-size:14.5px;color:#3b3b3b;">A</span>
<svg style="left:957px;top:121px" width="7" height="4" viewBox="0 0 7 4"><path d="M0.5 3.5 L3.5 0.7 L6.5 3.5" fill="none" stroke="#3d8fd4" stroke-width="1.2"/></svg>
<span class="t" style="left:973px;top:122.42px;font-size:12.5px;color:#3b3b3b;">A</span>
<svg style="left:981px;top:121px" width="7" height="4" viewBox="0 0 7 4"><path d="M0.5 0.5 L3.5 3.3 L6.5 0.5" fill="none" stroke="#3d8fd4" stroke-width="1.2"/></svg>
<span class="t" style="left:859.7px;top:147.09px;font-size:11px;color:#424242;">Fuente</span>
<svg style="left:985.5px;top:149px" width="8" height="8" viewBox="0 0 8 8"><path d="M0.6 7.4 V0.6 H7.4" fill="none" stroke="#605e5c" stroke-width="1"/><path d="M2.5 2.5 L7 7 M3.5 7 H7 V3.5" fill="none" stroke="#605e5c" stroke-width="1"/></svg>
<div class="a" style="left:1008px;top:69px;width:32px;height:31px;background:#fff;border:1px solid #8a8886"></div>
<div class="a" style="left:1017px;top:76.9px;width:14px;height:1.1px;background:#333;"></div>
<div class="a" style="left:1019px;top:81.0px;width:10px;height:1.1px;background:#333;"></div>
<div class="a" style="left:1017px;top:84.9px;width:14px;height:1.1px;background:#333;"></div>
<div class="a" style="left:1019px;top:89.1px;width:10px;height:1.1px;background:#333;"></div>
<span class="t" style="left:1005.8px;top:106.13px;font-size:11.3px;color:#333;">Párrafo</span>
<svg style="left:1021px;top:126px" width="7" height="4" viewBox="0 0 7 4"><path d="M0.5 0.5 L3.5 3.3 L6.5 0.5" fill="none" stroke="#555" stroke-width="1.2"/></svg>
<svg style="left:1067px;top:74px" width="22" height="26" viewBox="0 0 22 26"><path d="M1 25.5 L10.5 1 L20 25.5 M4.5 17 H16.5" fill="none" stroke="#262626" stroke-width="1.7"/></svg>
<svg style="left:1075px;top:82px" width="24" height="21" viewBox="0 0 24 21"><path d="M22 1.5 C23 2.5 22 4 20.5 5.5 L12 14 L10 12 L18.5 3.5 C20 2 21 0.8 22 1.5 Z" fill="#fff" stroke="#333" stroke-width="1.1"/><path d="M10 12 L12 14 C11 17.5 8 19.8 2 19.5 C4.5 17.5 5 15.5 6.5 13.5 C7.5 12 9 11.5 10 12 Z" fill="#4b9ae8"/></svg>
<span class="t" style="left:1065.7px;top:108.32px;font-size:11.2px;color:#333;">Estilos</span>
<svg style="left:1081px;top:128px" width="7" height="4" viewBox="0 0 7 4"><path d="M0.5 0.5 L3.5 3.3 L6.5 0.5" fill="none" stroke="#555" stroke-width="1.2"/></svg>
<span class="t" style="left:1057.5px;top:147.09px;font-size:11px;color:#424242;transform:scaleX(0.93);transform-origin:0 0;">Estilos</span>
<svg style="left:1099px;top:149px" width="8" height="8" viewBox="0 0 8 8"><path d="M0.6 7.4 V0.6 H7.4" fill="none" stroke="#605e5c" stroke-width="1"/><path d="M2.5 2.5 L7 7 M3.5 7 H7 V3.5" fill="none" stroke="#605e5c" stroke-width="1"/></svg>
<div class="a" style="left:1123px;top:69px;width:32px;height:31px;background:#fff;border:1px solid #8a8886"></div>
<svg style="left:1131px;top:76px" width="17" height="17" viewBox="0 0 17 17"><circle cx="10.3" cy="6.2" r="5" fill="none" stroke="#333" stroke-width="1.3"/><path d="M6.6 9.8 L1 15.3" stroke="#333" stroke-width="1.4"/></svg>
<span class="t" style="left:1119.4px;top:105.78px;font-size:11.6px;color:#333;">Edición</span>
<svg style="left:1135px;top:126px" width="7" height="4" viewBox="0 0 7 4"><path d="M0.5 0.5 L3.5 3.3 L6.5 0.5" fill="none" stroke="#555" stroke-width="1.2"/></svg>
<svg style="left:1199px;top:74px" width="27" height="29" viewBox="0 0 27 29"><path d="M3 1 H15 L19 5 V13 M11 26 H3 C2 26 1 25 1 24 V3 C1 2 2 1 3 1" fill="none" stroke="#4a7fd0" stroke-width="1.5"/><path d="M7 16 C9 10 10 6 9.5 5 C9 4 8 5.5 9 8 C10 11 12 13 14.5 14 C16 14.5 16 13.5 14.5 13.3 C12 13 9 14 7 16 Z" fill="none" stroke="#4a7fd0" stroke-width="1"/><path d="M16.5 15.5 L19 13 C20.5 11.5 23 12 24 13 C25 14 25.5 16.5 24 18 L21.5 20.5 M18.5 22 L16 24.5 C14.5 26 12 25.5 11 24.5 C10 23.5 9.5 21 11 19.5 L13.5 17 M15.5 21.5 L20.5 16.5" fill="none" stroke="#4a7fd0" stroke-width="1.5" stroke-linecap="round"/></svg>
<span class="t" style="left:1195.3px;top:108.30px;font-size:11.1px;color:#333;">Crear</span>
<span class="t" style="left:1190.7px;top:124.20px;font-size:11.1px;color:#333;">un PDF</span>
<span class="t" style="left:1171.2px;top:146.83px;font-size:11.3px;color:#424242;">Adobe Acrobat</span>
<svg style="left:1346.5px;top:152px" width="10" height="6" viewBox="0 0 10 6"><path d="M0.7 5 L5 0.8 L9.3 5" fill="none" stroke="#333" stroke-width="1.2"/></svg>
<div class="a" style="left:684px;top:161px;width:680px;height:6px;background:linear-gradient(#d4d4d4,#e6e6e6)"></div>
<div class="a" style="left:684px;top:167px;width:680px;height:19px;background:#e6e6e6;"></div>
<div class="a" style="left:688px;top:165.5px;width:14px;height:13px;background:#fff;border:1px solid #d0d0d0"></div>
<svg style="left:692px;top:168px" width="7" height="7" viewBox="0 0 7 7"><path d="M1.2 0.5 V5.8 H6.5" fill="none" stroke="#555" stroke-width="1.6"/></svg>
<div class="a" style="left:708px;top:167px;width:656px;height:10.5px;background:#fff;"></div>
<div class="a" style="left:708px;top:167px;width:43px;height:10.5px;background:#c8c8c8;"></div>
<span class="t" style="left:717.0px;top:167.98px;font-size:9px;color:#505050;transform:translateX(-50%) scaleX(1.0);transform-origin:50% 0;">1</span>
<div class="a" style="left:725.5px;top:172px;width:1px;height:1.2px;background:#505050;"></div>
<div class="a" style="left:735.5px;top:170.5px;width:1px;height:5px;background:#505050;"></div>
<div class="a" style="left:744.5px;top:172px;width:1px;height:1.2px;background:#505050;"></div>
<div class="a" style="left:763.5px;top:172px;width:1px;height:1.2px;background:#505050;"></div>
<div class="a" style="left:773.5px;top:170.5px;width:1px;height:5px;background:#505050;"></div>
<div class="a" style="left:782.5px;top:172px;width:1px;height:1.2px;background:#505050;"></div>
<span class="t" style="left:792.5999999999999px;top:167.98px;font-size:9px;color:#505050;transform:translateX(-50%) scaleX(1.0);transform-origin:50% 0;">1</span>
<div class="a" style="left:801.5px;top:172px;width:1px;height:1.2px;background:#505050;"></div>
<div class="a" style="left:811.5px;top:170.5px;width:1px;height:5px;background:#505050;"></div>
<div class="a" style="left:820.5px;top:172px;width:1px;height:1.2px;background:#505050;"></div>
<span class="t" style="left:830.4px;top:167.98px;font-size:9px;color:#505050;transform:translateX(-50%) scaleX(1.0);transform-origin:50% 0;">2</span>
<div class="a" style="left:839.5px;top:172px;width:1px;height:1.2px;background:#505050;"></div>
<div class="a" style="left:848.5px;top:170.5px;width:1px;height:5px;background:#505050;"></div>
<div class="a" style="left:858.5px;top:172px;width:1px;height:1.2px;background:#505050;"></div>
<span class="t" style="left:868.1999999999999px;top:167.98px;font-size:9px;color:#505050;transform:translateX(-50%) scaleX(1.0);transform-origin:50% 0;">3</span>
<div class="a" style="left:877.5px;top:172px;width:1px;height:1.2px;background:#505050;"></div>
<div class="a" style="left:886.5px;top:170.5px;width:1px;height:5px;background:#505050;"></div>
<div class="a" style="left:896.5px;top:172px;width:1px;height:1.2px;background:#505050;"></div>
<span class="t" style="left:906.0px;top:167.98px;font-size:9px;color:#505050;transform:translateX(-50%) scaleX(1.0);transform-origin:50% 0;">4</span>
<div class="a" style="left:914.5px;top:172px;width:1px;height:1.2px;background:#505050;"></div>
<div class="a" style="left:924.5px;top:170.5px;width:1px;height:5px;background:#505050;"></div>
<div class="a" style="left:933.5px;top:172px;width:1px;height:1.2px;background:#505050;"></div>
<span class="t" style="left:943.8px;top:167.98px;font-size:9px;color:#505050;transform:translateX(-50%) scaleX(1.0);transform-origin:50% 0;">5</span>
<div class="a" style="left:952.5px;top:172px;width:1px;height:1.2px;background:#505050;"></div>
<div class="a" style="left:962.5px;top:170.5px;width:1px;height:5px;background:#505050;"></div>
<div class="a" style="left:971.5px;top:172px;width:1px;height:1.2px;background:#505050;"></div>
<span class="t" style="left:981.5999999999999px;top:167.98px;font-size:9px;color:#505050;transform:translateX(-50%) scaleX(1.0);transform-origin:50% 0;">6</span>
<div class="a" style="left:990.5px;top:172px;width:1px;height:1.2px;background:#505050;"></div>
<div class="a" style="left:999.5px;top:170.5px;width:1px;height:5px;background:#505050;"></div>
<div class="a" style="left:1009.5px;top:172px;width:1px;height:1.2px;background:#505050;"></div>
<span class="t" style="left:1019.3999999999999px;top:167.98px;font-size:9px;color:#505050;transform:translateX(-50%) scaleX(1.0);transform-origin:50% 0;">7</span>
<div class="a" style="left:1028.5px;top:172px;width:1px;height:1.2px;background:#505050;"></div>
<div class="a" style="left:1037.5px;top:170.5px;width:1px;height:5px;background:#505050;"></div>
<div class="a" style="left:1047.5px;top:172px;width:1px;height:1.2px;background:#505050;"></div>
<span class="t" style="left:1057.1999999999998px;top:167.98px;font-size:9px;color:#505050;transform:translateX(-50%) scaleX(1.0);transform-origin:50% 0;">8</span>
<div class="a" style="left:1066.5px;top:172px;width:1px;height:1.2px;background:#505050;"></div>
<div class="a" style="left:1075.5px;top:170.5px;width:1px;height:5px;background:#505050;"></div>
<div class="a" style="left:1085.5px;top:172px;width:1px;height:1.2px;background:#505050;"></div>
<span class="t" style="left:1095.0px;top:167.98px;font-size:9px;color:#505050;transform:translateX(-50%) scaleX(1.0);transform-origin:50% 0;">9</span>
<div class="a" style="left:1103.5px;top:172px;width:1px;height:1.2px;background:#505050;"></div>
<div class="a" style="left:1113.5px;top:170.5px;width:1px;height:5px;background:#505050;"></div>
<div class="a" style="left:1122.5px;top:172px;width:1px;height:1.2px;background:#505050;"></div>
<span class="t" style="left:1132.8px;top:167.98px;font-size:9px;color:#505050;transform:translateX(-50%) scaleX(1.0);transform-origin:50% 0;">10</span>
<div class="a" style="left:1141.5px;top:172px;width:1px;height:1.2px;background:#505050;"></div>
<div class="a" style="left:1151.5px;top:170.5px;width:1px;height:5px;background:#505050;"></div>
<div class="a" style="left:1160.5px;top:172px;width:1px;height:1.2px;background:#505050;"></div>
<span class="t" style="left:1170.6px;top:167.98px;font-size:9px;color:#505050;transform:translateX(-50%) scaleX(1.0);transform-origin:50% 0;">11</span>
<div class="a" style="left:1179.5px;top:172px;width:1px;height:1.2px;background:#505050;"></div>
<div class="a" style="left:1189.5px;top:170.5px;width:1px;height:5px;background:#505050;"></div>
<div class="a" style="left:1198.5px;top:172px;width:1px;height:1.2px;background:#505050;"></div>
<span class="t" style="left:1208.3999999999999px;top:167.98px;font-size:9px;color:#505050;transform:translateX(-50%) scaleX(1.0);transform-origin:50% 0;">12</span>
<div class="a" style="left:1217.5px;top:172px;width:1px;height:1.2px;background:#505050;"></div>
<div class="a" style="left:1226.5px;top:170.5px;width:1px;height:5px;background:#505050;"></div>
<div class="a" style="left:1236.5px;top:172px;width:1px;height:1.2px;background:#505050;"></div>
<span class="t" style="left:1246.1999999999998px;top:167.98px;font-size:9px;color:#505050;transform:translateX(-50%) scaleX(1.0);transform-origin:50% 0;">13</span>
<div class="a" style="left:1255.5px;top:172px;width:1px;height:1.2px;background:#505050;"></div>
<div class="a" style="left:1264.5px;top:170.5px;width:1px;height:5px;background:#505050;"></div>
<div class="a" style="left:1274.5px;top:172px;width:1px;height:1.2px;background:#505050;"></div>
<span class="t" style="left:1284.0px;top:167.98px;font-size:9px;color:#505050;transform:translateX(-50%) scaleX(1.0);transform-origin:50% 0;">14</span>
<div class="a" style="left:1292.5px;top:172px;width:1px;height:1.2px;background:#505050;"></div>
<div class="a" style="left:1302.5px;top:170.5px;width:1px;height:5px;background:#505050;"></div>
<div class="a" style="left:1311.5px;top:172px;width:1px;height:1.2px;background:#505050;"></div>
<span class="t" style="left:1321.8px;top:167.98px;font-size:9px;color:#505050;transform:translateX(-50%) scaleX(1.0);transform-origin:50% 0;">15</span>
<div class="a" style="left:1330.5px;top:172px;width:1px;height:1.2px;background:#505050;"></div>
<div class="a" style="left:1340.5px;top:170.5px;width:1px;height:5px;background:#505050;"></div>
<div class="a" style="left:1349.5px;top:172px;width:1px;height:1.2px;background:#505050;"></div>
<span class="t" style="left:1359.6px;top:167.98px;font-size:9px;color:#505050;transform:translateX(-50%) scaleX(1.0);transform-origin:50% 0;">16</span>
<svg style="left:749px;top:164px" width="12" height="20" viewBox="0 0 12 20"><path d="M0.5 0.5 H11 L5.75 6 Z" fill="#fff" stroke="#8c8c8c" stroke-width="1"/><path d="M5.75 6 L11 11.5 H0.5 Z" fill="#fff" stroke="#8c8c8c" stroke-width="1"/><rect x="0.5" y="12" width="10.5" height="6.5" fill="#fff" stroke="#8c8c8c" stroke-width="1"/></svg>
<div class="a" style="left:753px;top:168.5px;width:1px;height:7px;background:#666;"></div>
<svg style="left:752px;top:168px" width="6" height="7" viewBox="0 0 6 7"><path d="M0.5 0.5 L5.5 6.5 M5.5 0.5 L0.5 6.5" stroke="#666" stroke-width="0.9"/></svg>
<svg style="left:1168px;top:171px" width="9" height="9" viewBox="0 0 9 9"><path d="M4.5 0.5 L8.5 5 V8.5 H0.5 V5 Z" fill="#fff" stroke="#8c8c8c" stroke-width="1"/></svg>
<div class="a" style="left:689px;top:186px;width:11px;height:502px;background:#fff;"></div>
<div class="a" style="left:689px;top:198.3px;width:11px;height:7.0px;background:#c8c8c8;"></div>
<div class="a" style="left:689px;top:346px;width:11px;height:7px;background:#c8c8c8;"></div>
<div class="a" style="left:689px;top:364px;width:11px;height:7px;background:#c8c8c8;"></div>
<div class="a" style="left:689px;top:381.6px;width:11px;height:7.099999999999966px;background:#c8c8c8;"></div>
<div class="a" style="left:689px;top:400.4px;width:11px;height:7.600000000000023px;background:#c8c8c8;"></div>
<div class="a" style="left:689px;top:416px;width:11px;height:6.699999999999989px;background:#c8c8c8;"></div>
<div class="a" style="left:689px;top:430.9px;width:11px;height:7.0px;background:#c8c8c8;"></div>
<div class="a" style="left:689px;top:456.6px;width:11px;height:7.7999999999999545px;background:#c8c8c8;"></div>
<div class="a" style="left:689px;top:532px;width:11px;height:6.7000000000000455px;background:#c8c8c8;"></div>
<div class="a" style="left:689px;top:568.3px;width:11px;height:7.0px;background:#c8c8c8;"></div>
<div class="a" style="left:689px;top:624px;width:11px;height:7px;background:#c8c8c8;"></div>
<div class="a" style="left:689px;top:679.7px;width:11px;height:7.399999999999977px;background:#c8c8c8;"></div>
<div class="a" style="left:692.5px;top:195.5px;width:5px;height:1px;background:#505050;"></div>
<div class="a" style="left:694px;top:204.5px;width:1.2px;height:1px;background:#505050;"></div>
<span class="t" style="left:694.5px;top:214.7px;font-size:9px;color:#505050;transform:translate(-50%,-50%) rotate(-90deg);transform-origin:50% 50%">8</span>
<div class="a" style="left:694px;top:223.5px;width:1.2px;height:1px;background:#505050;"></div>
<div class="a" style="left:692.5px;top:233.5px;width:5px;height:1px;background:#505050;"></div>
<div class="a" style="left:694px;top:242.5px;width:1.2px;height:1px;background:#505050;"></div>
<span class="t" style="left:694.5px;top:252.5px;font-size:9px;color:#505050;transform:translate(-50%,-50%) rotate(-90deg);transform-origin:50% 50%">9</span>
<div class="a" style="left:694px;top:261.5px;width:1.2px;height:1px;background:#505050;"></div>
<div class="a" style="left:692.5px;top:270.5px;width:5px;height:1px;background:#505050;"></div>
<div class="a" style="left:694px;top:280.5px;width:1.2px;height:1px;background:#505050;"></div>
<span class="t" style="left:694.5px;top:290.3px;font-size:9px;color:#505050;transform:translate(-50%,-50%) rotate(-90deg);transform-origin:50% 50%">10</span>
<div class="a" style="left:694px;top:299.5px;width:1.2px;height:1px;background:#505050;"></div>
<div class="a" style="left:692.5px;top:308.5px;width:5px;height:1px;background:#505050;"></div>
<div class="a" style="left:694px;top:318.5px;width:1.2px;height:1px;background:#505050;"></div>
<span class="t" style="left:694.5px;top:328.1px;font-size:9px;color:#505050;transform:translate(-50%,-50%) rotate(-90deg);transform-origin:50% 50%">11</span>
<div class="a" style="left:694px;top:337.5px;width:1.2px;height:1px;background:#505050;"></div>
<div class="a" style="left:692.5px;top:346.5px;width:5px;height:1px;background:#505050;"></div>
<div class="a" style="left:694px;top:355.5px;width:1.2px;height:1px;background:#505050;"></div>
<span class="t" style="left:694.5px;top:365.9px;font-size:9px;color:#505050;transform:translate(-50%,-50%) rotate(-90deg);transform-origin:50% 50%">12</span>
<div class="a" style="left:694px;top:374.5px;width:1.2px;height:1px;background:#505050;"></div>
<div class="a" style="left:692.5px;top:384.5px;width:5px;height:1px;background:#505050;"></div>
<div class="a" style="left:694px;top:393.5px;width:1.2px;height:1px;background:#505050;"></div>
<span class="t" style="left:694.5px;top:403.7px;font-size:9px;color:#505050;transform:translate(-50%,-50%) rotate(-90deg);transform-origin:50% 50%">13</span>
<div class="a" style="left:694px;top:412.5px;width:1.2px;height:1px;background:#505050;"></div>
<div class="a" style="left:692.5px;top:422.5px;width:5px;height:1px;background:#505050;"></div>
<div class="a" style="left:694px;top:431.5px;width:1.2px;height:1px;background:#505050;"></div>
<span class="t" style="left:694.5px;top:441.5px;font-size:9px;color:#505050;transform:translate(-50%,-50%) rotate(-90deg);transform-origin:50% 50%">14</span>
<div class="a" style="left:694px;top:450.5px;width:1.2px;height:1px;background:#505050;"></div>
<div class="a" style="left:692.5px;top:459.5px;width:5px;height:1px;background:#505050;"></div>
<div class="a" style="left:694px;top:469.5px;width:1.2px;height:1px;background:#505050;"></div>
<span class="t" style="left:694.5px;top:479.3px;font-size:9px;color:#505050;transform:translate(-50%,-50%) rotate(-90deg);transform-origin:50% 50%">15</span>
<div class="a" style="left:694px;top:488.5px;width:1.2px;height:1px;background:#505050;"></div>
<div class="a" style="left:692.5px;top:497.5px;width:5px;height:1px;background:#505050;"></div>
<div class="a" style="left:694px;top:507.5px;width:1.2px;height:1px;background:#505050;"></div>
<span class="t" style="left:694.5px;top:517.1px;font-size:9px;color:#505050;transform:translate(-50%,-50%) rotate(-90deg);transform-origin:50% 50%">16</span>
<div class="a" style="left:694px;top:526.5px;width:1.2px;height:1px;background:#505050;"></div>
<div class="a" style="left:692.5px;top:535.5px;width:5px;height:1px;background:#505050;"></div>
<div class="a" style="left:694px;top:544.5px;width:1.2px;height:1px;background:#505050;"></div>
<span class="t" style="left:694.5px;top:554.9px;font-size:9px;color:#505050;transform:translate(-50%,-50%) rotate(-90deg);transform-origin:50% 50%">17</span>
<div class="a" style="left:694px;top:563.5px;width:1.2px;height:1px;background:#505050;"></div>
<div class="a" style="left:692.5px;top:573.5px;width:5px;height:1px;background:#505050;"></div>
<div class="a" style="left:694px;top:582.5px;width:1.2px;height:1px;background:#505050;"></div>
<span class="t" style="left:694.5px;top:592.7px;font-size:9px;color:#505050;transform:translate(-50%,-50%) rotate(-90deg);transform-origin:50% 50%">18</span>
<div class="a" style="left:694px;top:601.5px;width:1.2px;height:1px;background:#505050;"></div>
<div class="a" style="left:692.5px;top:611.5px;width:5px;height:1px;background:#505050;"></div>
<div class="a" style="left:694px;top:620.5px;width:1.2px;height:1px;background:#505050;"></div>
<span class="t" style="left:694.5px;top:630.5px;font-size:9px;color:#505050;transform:translate(-50%,-50%) rotate(-90deg);transform-origin:50% 50%">19</span>
<div class="a" style="left:694px;top:639.5px;width:1.2px;height:1px;background:#505050;"></div>
<div class="a" style="left:692.5px;top:648.5px;width:5px;height:1px;background:#505050;"></div>
<div class="a" style="left:694px;top:658.5px;width:1.2px;height:1px;background:#505050;"></div>
<span class="t" style="left:694.5px;top:668.3px;font-size:9px;color:#505050;transform:translate(-50%,-50%) rotate(-90deg);transform-origin:50% 50%">20</span>
<div class="a" style="left:694px;top:677.5px;width:1.2px;height:1px;background:#505050;"></div>
<div class="a" style="left:708px;top:186px;width:640px;height:502px;background:#fff;"></div>
<div class="a" style="left:708px;top:186px;width:640px;height:502px;overflow:hidden">
<div class="a" style="left:-708px;top:-186px;width:1366px;height:768px">
<div class="a" style="left:755.5px;top:186px;width:645px;height:14px;background:#d9d9d9;"></div>
<div class="a" style="left:755px;top:200px;width:645px;height:1px;background:#000;"></div>
<div class="a" style="left:755px;top:186px;width:1px;height:273px;background:#000;"></div>
<span class="t" style="left:766px;top:204.13px;font-size:14.5px;font-weight:bold;color:#111;transform:scaleX(0.89);transform-origin:0 0;">FECHA:</span>
<span class="t" style="left:818.6px;top:204.13px;font-size:14.5px;color:#111;transform:scaleX(0.89);transform-origin:0 0;">28/10/2025</span>
<span class="t" style="left:766px;top:222.83px;font-size:14.5px;font-weight:bold;color:#111;transform:scaleX(0.89);transform-origin:0 0;">ÁREA REQUIRENTE:</span>
<span class="t" style="left:899.2px;top:222.83px;font-size:14.5px;color:#111;transform:scaleX(0.89);transform-origin:0 0;">PROYECTOS SOCIALES</span>
<span class="t" style="left:766.1px;top:241.03px;font-size:14.5px;font-weight:bold;color:#111;transform:scaleX(0.89);transform-origin:0 0;">NÚMERO</span>
<span class="t" style="left:828.7px;top:241.03px;font-size:14.5px;font-weight:bold;color:#111;transform:scaleX(0.89);transform-origin:0 0;">DE</span>
<span class="t" style="left:851.2px;top:241.03px;font-size:14.5px;font-weight:bold;color:#111;transform:scaleX(0.89);transform-origin:0 0;">CERTIFICACIÓN</span>
<span class="t" style="left:956.8px;top:241.03px;font-size:14.5px;font-weight:bold;color:#111;transform:scaleX(0.89);transform-origin:0 0;">PRESUPUESTARIA:</span>
<span class="t" style="left:1088.9px;top:241.03px;font-size:14.5px;font-style:italic;color:#111;transform:scaleX(0.89);transform-origin:0 0;">CER-2025-OCT-0011</span>
<span class="t" style="left:1218px;top:241.03px;font-size:14.5px;font-style:italic;color:#111;transform:scaleX(0.89);transform-origin:0 0;">con</span>
<span class="t" style="left:1241.6px;top:241.03px;font-size:14.5px;font-style:italic;color:#111;transform:scaleX(0.89);transform-origin:0 0;">cargo</span>
<span class="t" style="left:1280.9px;top:241.03px;font-size:14.5px;font-style:italic;color:#111;transform:scaleX(0.89);transform-origin:0 0;">a</span>
<span class="t" style="left:1294.3px;top:241.03px;font-size:14.5px;font-style:italic;color:#111;transform:scaleX(0.89);transform-origin:0 0;">la</span>
<span class="t" style="left:1307.5px;top:241.03px;font-size:14.5px;font-style:italic;color:#111;transform:scaleX(0.89);transform-origin:0 0;">partida</span>
<span class="t" style="left:766px;top:259.73px;font-size:14.5px;font-style:italic;color:#111;transform:scaleX(0.89);transform-origin:0 0;">73.08.12</span>
<span class="t" style="left:819.2px;top:259.73px;font-size:14.5px;color:#111;transform:scaleX(0.89);transform-origin:0 0;">denominada Material didáctico.</span>
<span class="t" style="left:765.5px;top:278.23px;font-size:14.5px;font-weight:bold;color:#111;transform:scaleX(0.89);transform-origin:0 0;">OBJETO</span>
<span class="t" style="left:827px;top:278.23px;font-size:14.5px;font-weight:bold;color:#111;transform:scaleX(0.89);transform-origin:0 0;">DE</span>
<span class="t" style="left:852.2px;top:278.23px;font-size:14.5px;font-weight:bold;color:#111;transform:scaleX(0.89);transform-origin:0 0;">CONTRATACIÓN:</span>
<span class="t" style="left:970.8px;top:278.23px;font-size:14.5px;color:#111;transform:scaleX(0.89);transform-origin:0 0;">El</span>
<span class="t" style="left:989.5px;top:278.23px;font-size:14.5px;color:#111;transform:scaleX(0.89);transform-origin:0 0;">Contratista</span>
<span class="t" style="left:1059.9px;top:278.23px;font-size:14.5px;color:#111;transform:scaleX(0.89);transform-origin:0 0;">se</span>
<span class="t" style="left:1081.8px;top:278.23px;font-size:14.5px;color:#111;transform:scaleX(0.89);transform-origin:0 0;">obliga</span>
<span class="t" style="left:1124.2px;top:278.23px;font-size:14.5px;color:#111;transform:scaleX(0.89);transform-origin:0 0;">con</span>
<span class="t" style="left:1152.1px;top:278.23px;font-size:14.5px;color:#111;transform:scaleX(0.89);transform-origin:0 0;">el</span>
<span class="t" style="left:1170.8px;top:278.23px;font-size:14.5px;color:#111;transform:scaleX(0.89);transform-origin:0 0;">GAD</span>
<span class="t" style="left:1206px;top:278.23px;font-size:14.5px;color:#111;transform:scaleX(0.89);transform-origin:0 0;">Parroquial</span>
<span class="t" style="left:1273.6px;top:278.23px;font-size:14.5px;color:#111;transform:scaleX(0.89);transform-origin:0 0;">Rural</span>
<span class="t" style="left:1311.4px;top:278.23px;font-size:14.5px;color:#111;transform:scaleX(0.89);transform-origin:0 0;">de</span>
<span class="t" style="left:1333.3px;top:278.23px;font-size:14.5px;color:#111;transform:scaleX(0.89);transform-origin:0 0;">San</span>
<span class="t" style="left:766.1px;top:296.73px;font-size:14.5px;font-style:italic;color:#111;transform:scaleX(0.89);transform-origin:0 0;">ADQUISICION</span>
<span class="t" style="left:857.7px;top:296.73px;font-size:14.5px;font-style:italic;color:#111;transform:scaleX(0.89);transform-origin:0 0;">DE</span>
<span class="t" style="left:881.2px;top:296.73px;font-size:14.5px;font-style:italic;color:#111;transform:scaleX(0.89);transform-origin:0 0;">MATERIAL</span>
<span class="t" style="left:952.2px;top:296.73px;font-size:14.5px;font-style:italic;color:#111;transform:scaleX(0.89);transform-origin:0 0;">DIDACTICO</span>
<span class="t" style="left:1030.2px;top:296.73px;font-size:14.5px;font-style:italic;color:#111;transform:scaleX(0.89);transform-origin:0 0;">AM</span>
<span class="t" style="left:1054.4px;top:296.73px;font-size:14.5px;font-style:italic;color:#111;transform:scaleX(0.89);transform-origin:0 0;">MODALIDAD</span>
<span class="t" style="left:1137.4px;top:296.73px;font-size:14.5px;font-style:italic;color:#111;transform:scaleX(0.89);transform-origin:0 0;">ATENCION</span>
<span class="t" style="left:1209.9px;top:296.73px;font-size:14.5px;font-style:italic;color:#111;transform:scaleX(0.89);transform-origin:0 0;">DOMICILIARIA</span>
<span class="t" style="left:1304.3px;top:296.73px;font-size:14.5px;font-style:italic;color:#111;transform:scaleX(0.89);transform-origin:0 0;">SIN</span>
<span class="t" style="left:1331.1px;top:296.73px;font-size:14.5px;font-style:italic;color:#111;transform:scaleX(0.89);transform-origin:0 0;">DISCAPACIDAD</span>
<span class="t" style="left:766.1px;top:315.23px;font-size:14.5px;font-style:italic;color:#111;transform:scaleX(0.89);transform-origin:0 0;">GAD</span>
<span class="t" style="left:800px;top:315.23px;font-size:14.5px;font-style:italic;color:#111;transform:scaleX(0.89);transform-origin:0 0;">PARROQUIAL</span>
<span class="t" style="left:891.1px;top:315.23px;font-size:14.5px;font-style:italic;color:#111;transform:scaleX(0.89);transform-origin:0 0;">RURAL</span>
<span class="t" style="left:941.2px;top:315.23px;font-size:14.5px;font-style:italic;color:#111;transform:scaleX(0.89);transform-origin:0 0;">SAN</span>
<span class="t" style="left:975.2px;top:315.23px;font-size:14.5px;font-style:italic;color:#111;transform:scaleX(0.89);transform-origin:0 0;">JUAN,</span>
<span class="t" style="left:1015.9px;top:315.23px;font-size:14.5px;color:#111;transform:scaleX(0.89);transform-origin:0 0;">a</span>
<span class="t" style="left:1026.4px;top:315.23px;font-size:14.5px;color:#111;transform:scaleX(0.89);transform-origin:0 0;">entera</span>
<span class="t" style="left:1070.9px;top:315.23px;font-size:14.5px;color:#111;transform:scaleX(0.89);transform-origin:0 0;">satisfacción</span>
<span class="t" style="left:1144.9px;top:315.23px;font-size:14.5px;color:#111;transform:scaleX(0.89);transform-origin:0 0;">del</span>
<span class="t" style="left:1168.6px;top:315.23px;font-size:14.5px;color:#111;transform:scaleX(0.89);transform-origin:0 0;">GAD</span>
<span class="t" style="left:1201.7px;top:315.23px;font-size:14.5px;color:#111;transform:scaleX(0.89);transform-origin:0 0;">Parroquial</span>
<span class="t" style="left:1266.9px;top:315.23px;font-size:14.5px;color:#111;transform:scaleX(0.89);transform-origin:0 0;">Rural</span>
<span class="t" style="left:1303.8px;top:315.23px;font-size:14.5px;color:#111;transform:scaleX(0.89);transform-origin:0 0;">de</span>
<span class="t" style="left:1323.9px;top:315.23px;font-size:14.5px;color:#111;transform:scaleX(0.89);transform-origin:0 0;">San</span>
<span class="t" style="left:765.5px;top:333.73px;font-size:14.5px;color:#111;transform:scaleX(0.89);transform-origin:0 0;">siguiente detalle:</span>
<div class="a" style="left:755px;top:347px;width:645px;height:1px;background:#000;"></div>
<div class="a" style="left:756px;top:348px;width:644px;height:18px;background:#d9d9d9;"></div>
<div class="a" style="left:755px;top:366px;width:645px;height:1px;background:#000;"></div>
<span class="t" style="left:757px;top:366.23px;font-size:14.5px;font-weight:bold;color:#111;transform:scaleX(0.89);transform-origin:0 0;">PROVEEDOR:</span>
<span class="t" style="left:847.4px;top:366.23px;font-size:14.5px;font-style:italic;color:#111;transform:scaleX(0.92);transform-origin:0 0;">ALVARADO ESPINOZA ARTURO PATRICIO</span>
<span class="t" style="left:757px;top:386.83px;font-size:14.5px;font-weight:bold;color:#111;transform:scaleX(0.89);transform-origin:0 0;">RUC:</span>
<span class="t" style="left:792.4px;top:386.83px;font-size:14.5px;color:#111;transform:scaleX(0.89);transform-origin:0 0;">1260023860001</span>
<span class="t" style="left:757px;top:402.33px;font-size:14.5px;font-weight:bold;color:#111;transform:scaleX(0.89);transform-origin:0 0;">TELEFONO:</span>
<span class="t" style="left:837.7px;top:402.33px;font-size:14.5px;color:#111;transform:scaleX(0.89);transform-origin:0 0;">0939622478</span>
<span class="t" style="left:757px;top:416.93px;font-size:14.5px;font-weight:bold;color:#111;transform:scaleX(0.89);transform-origin:0 0;">DIRECCION:</span>
<span class="t" style="left:836.7px;top:416.93px;font-size:14.5px;color:#111;transform:scaleX(0.89);transform-origin:0 0;">CALLE 24 DE MAYO Y LEON DE FEBRES CORDERO</span>
<span class="t" style="left:757px;top:432.83px;font-size:14.5px;font-weight:bold;color:#111;transform:scaleX(0.89);transform-origin:0 0;">CORREO:</span>
<span class="t" style="left:821.3px;top:432.83px;font-size:14.5px;font-weight:bold;color:#111;transform:scaleX(0.827);transform-origin:0 0;">comisariatoescolar.ec@hotmail.com</span>
<div class="a" style="left:1029px;top:433px;width:1.2px;height:14px;background:#000;"></div>
<div class="a" style="left:1173px;top:366px;width:1px;height:93px;background:#000;"></div>
<span class="t" style="left:1181.6px;top:370.03px;font-size:14.5px;font-weight:bold;color:#111;transform:scaleX(0.89);transform-origin:0 0;">PROFORMA Nro:</span>
<span class="t" style="left:1292.3px;top:370.03px;font-size:14.5px;color:#111;transform:scaleX(0.89);transform-origin:0 0;">001-001-</span>
<span class="t" style="left:1181.6px;top:388.33px;font-size:14.5px;color:#111;transform:scaleX(0.89);transform-origin:0 0;">00000400273</span>
<span class="t" style="left:1181.6px;top:406.73px;font-size:14.5px;font-weight:bold;color:#111;transform:scaleX(0.89);transform-origin:0 0;">FECHA:</span>
<span class="t" style="left:1234.8px;top:406.73px;font-size:14.5px;color:#111;transform:scaleX(0.89);transform-origin:0 0;">02/10/2025</span>
<span class="t" style="left:1181.6px;top:425.23px;font-size:14.5px;font-weight:bold;color:#111;transform:scaleX(0.89);transform-origin:0 0;">CONTACTO:</span>
<span class="t" style="left:1266.2px;top:425.23px;font-size:14.5px;font-style:italic;color:#111;transform:scaleX(0.92);transform-origin:0 0;">Alvarado Arturo</span>
<span class="t" style="left:1181.6px;top:443.43px;font-size:14.5px;font-weight:bold;color:#111;transform:scaleX(0.89);transform-origin:0 0;">VIGENCIA:</span>
<span class="t" style="left:1253.5px;top:443.43px;font-size:14.5px;font-style:italic;color:#111;transform:scaleX(0.92);transform-origin:0 0;">30 días</span>
<div class="a" style="left:755px;top:459px;width:645px;height:1px;background:#000;"></div>
<div class="a" style="left:756px;top:460.6px;width:644px;height:72.39999999999999px;background:#d9d9d9;"></div>
<div class="a" style="left:755px;top:533px;width:645px;height:1px;background:#000;"></div>
<div class="a" style="left:755px;top:570px;width:645px;height:1px;background:#000;"></div>
<div class="a" style="left:755px;top:626px;width:645px;height:1px;background:#000;"></div>
<div class="a" style="left:755px;top:682px;width:645px;height:1px;background:#000;"></div>
<div class="a" style="left:755px;top:459.3px;width:1px;height:228.7px;background:#000;"></div>
<div class="a" style="left:782px;top:459.3px;width:1px;height:228.7px;background:#000;"></div>
<div class="a" style="left:852px;top:459.3px;width:1px;height:228.7px;background:#000;"></div>
<div class="a" style="left:1097px;top:459.3px;width:1px;height:228.7px;background:#000;"></div>
<div class="a" style="left:1173px;top:459.3px;width:1px;height:228.7px;background:#000;"></div>
<div class="a" style="left:1267px;top:459.3px;width:1px;height:228.7px;background:#000;"></div>
<span class="t" style="left:769px;top:463.03px;font-size:14.5px;font-weight:bold;color:#111;transform:translateX(-50%) scaleX(0.89);transform-origin:50% 0;">I</span>
<span class="t" style="left:769px;top:481.63px;font-size:14.5px;font-weight:bold;color:#111;transform:translateX(-50%) scaleX(0.89);transform-origin:50% 0;">T</span>
<span class="t" style="left:769px;top:500.23px;font-size:14.5px;font-weight:bold;color:#111;transform:translateX(-50%) scaleX(0.89);transform-origin:50% 0;">E</span>
<span class="t" style="left:769px;top:518.63px;font-size:14.5px;font-weight:bold;color:#111;transform:translateX(-50%) scaleX(0.89);transform-origin:50% 0;">M</span>
<span class="t" style="left:818.2px;top:482.63px;font-size:14.5px;font-weight:bold;color:#111;transform:translateX(-50%) scaleX(0.89);transform-origin:50% 0;">CPC</span>
<span class="t" style="left:944px;top:482.63px;font-size:14.5px;font-weight:bold;color:#111;transform:translateX(-50%) scaleX(0.89);transform-origin:50% 0;">DESCRIPCIÓN</span>
<span class="t" style="left:1136.5px;top:470.93px;font-size:14.5px;font-weight:bold;color:#111;transform:translateX(-50%) scaleX(0.89);transform-origin:50% 0;">UNIDAD</span>
<span class="t" style="left:1136.5px;top:489.53px;font-size:14.5px;font-weight:bold;color:#111;transform:translateX(-50%) scaleX(0.89);transform-origin:50% 0;">DE</span>
<span class="t" style="left:1136.5px;top:508.13px;font-size:14.5px;font-weight:bold;color:#111;transform:translateX(-50%) scaleX(0.89);transform-origin:50% 0;">MEDIDA</span>
<span class="t" style="left:1219.5px;top:482.63px;font-size:14.5px;font-weight:bold;color:#111;transform:translateX(-50%) scaleX(0.89);transform-origin:50% 0;">CANTIDAD</span>
<span class="t" style="left:1279px;top:482.63px;font-size:14.5px;font-weight:bold;color:#111;transform:scaleX(0.89);transform-origin:0 0;">V.UNITARIO</span>
<span class="t" style="left:769.3px;top:536.23px;font-size:14.5px;color:#111;transform:translateX(-50%) scaleX(0.89);transform-origin:50% 0;">1</span>
<span class="t" style="left:783.3px;top:536.23px;font-size:14.5px;color:#111;transform:scaleX(0.9);transform-origin:0 0;">346200922</span>
<span class="t" style="left:853.5px;top:536.23px;font-size:14.5px;color:#111;transform:scaleX(0.91);transform-origin:0 0;">AMBIENTAL VARIAS FRAGANCIAS EN</span>
<span class="t" style="left:853.5px;top:554.83px;font-size:14.5px;color:#111;transform:scaleX(0.91);transform-origin:0 0;">AEROSOL 400 CC</span>
<span class="t" style="left:1136px;top:536.23px;font-size:14.5px;color:#111;transform:translateX(-50%) scaleX(0.89);transform-origin:50% 0;">Unidad</span>
<span class="t" style="left:1220.5px;top:536.23px;font-size:14.5px;color:#111;transform:translateX(-50%) scaleX(0.89);transform-origin:50% 0;">12</span>
<span class="t" style="left:1319.7px;top:536.23px;font-size:14.5px;color:#111;transform:translateX(-50%) scaleX(0.89);transform-origin:50% 0;">3.20</span>
<span class="t" style="left:769.3px;top:573.73px;font-size:14.5px;color:#111;transform:translateX(-50%) scaleX(0.89);transform-origin:50% 0;">2</span>
<span class="t" style="left:783.3px;top:573.73px;font-size:14.5px;color:#111;transform:scaleX(0.9);transform-origin:0 0;">346200922</span>
<span class="t" style="left:853.5px;top:573.73px;font-size:14.5px;color:#111;transform:scaleX(0.91);transform-origin:0 0;">786212393318D3ESINFECTANTE</span>
<span class="t" style="left:853.5px;top:592.33px;font-size:14.5px;color:#111;transform:scaleX(0.91);transform-origin:0 0;">AMONIO CUATERNARIO 5ta</span>
<span class="t" style="left:853.5px;top:610.93px;font-size:14.5px;color:#111;transform:scaleX(0.91);transform-origin:0 0;">GENERACION 10%</span>
<span class="t" style="left:1136px;top:573.73px;font-size:14.5px;color:#111;transform:translateX(-50%) scaleX(0.89);transform-origin:50% 0;">Unidad</span>
<span class="t" style="left:1220.5px;top:573.73px;font-size:14.5px;color:#111;transform:translateX(-50%) scaleX(0.89);transform-origin:50% 0;">4</span>
<span class="t" style="left:1319.7px;top:573.73px;font-size:14.5px;color:#111;transform:translateX(-50%) scaleX(0.89);transform-origin:50% 0;">14.90</span>
<span class="t" style="left:769.3px;top:629.13px;font-size:14.5px;color:#111;transform:translateX(-50%) scaleX(0.89);transform-origin:50% 0;">3</span>
<span class="t" style="left:783.3px;top:629.13px;font-size:14.5px;color:#111;transform:scaleX(0.9);transform-origin:0 0;">346200922</span>
<span class="t" style="left:853.5px;top:629.13px;font-size:14.5px;color:#111;transform:scaleX(0.91);transform-origin:0 0;">ESCOBA DE PLASTICO CERDAS</span>
<span class="t" style="left:853.5px;top:647.73px;font-size:14.5px;color:#111;transform:scaleX(0.91);transform-origin:0 0;">SUAVES BASTÓN DE MADERA120 CM,</span>
<span class="t" style="left:853.5px;top:666.33px;font-size:14.5px;color:#111;transform:scaleX(0.91);transform-origin:0 0;">INCLUIDO</span>
<span class="t" style="left:1136px;top:629.13px;font-size:14.5px;color:#111;transform:translateX(-50%) scaleX(0.89);transform-origin:50% 0;">Unidad</span>
<span class="t" style="left:1220.5px;top:629.13px;font-size:14.5px;color:#111;transform:translateX(-50%) scaleX(0.89);transform-origin:50% 0;">12</span>
<span class="t" style="left:1319.7px;top:629.13px;font-size:14.5px;color:#111;transform:translateX(-50%) scaleX(0.89);transform-origin:50% 0;">1.50</span>
<span class="t" style="left:769.3px;top:685.43px;font-size:14.5px;color:#111;transform:translateX(-50%) scaleX(0.89);transform-origin:50% 0;">4</span>
<span class="t" style="left:783.3px;top:685.43px;font-size:14.5px;color:#111;transform:scaleX(0.9);transform-origin:0 0;">346200922</span>
<span class="t" style="left:853.5px;top:685.43px;font-size:14.5px;color:#111;transform:scaleX(0.91);transform-origin:0 0;">PAÑITOS HUMEDOS x 100 unidades</span>
<span class="t" style="left:1136px;top:685.43px;font-size:14.5px;color:#111;transform:translateX(-50%) scaleX(0.89);transform-origin:50% 0;">Unidad</span>
<span class="t" style="left:1220.5px;top:685.43px;font-size:14.5px;color:#111;transform:translateX(-50%) scaleX(0.89);transform-origin:50% 0;">24</span>
<span class="t" style="left:1319.7px;top:685.43px;font-size:14.5px;color:#111;transform:translateX(-50%) scaleX(0.89);transform-origin:50% 0;">1.25</span>
<span class="t" style="left:977px;top:615.00px;font-size:8.5px;color:#111;transform:scaleX(0.9);transform-origin:0 0;">CANECA 20 L</span>
</div></div>
<div class="a" style="left:1032.5px;top:452px;width:60px;height:21.5px;background:#fff;border:1px solid #c8c8c8"></div>
<svg style="left:1036px;top:454px" width="17" height="17" viewBox="0 0 17 17"><path d="M3.5 3 H1 V15.5 H6" fill="none" stroke="#e8a33d" stroke-width="1.3"/><path d="M3.5 4.5 V2 H5.5 C5.5 0.8 6.2 0.5 7 0.5 C7.8 0.5 8.5 0.8 8.5 2 H10.5 V4.5 Z" fill="#fff" stroke="#555" stroke-width="1"/><rect x="7" y="7" width="8" height="9.5" fill="#fff" stroke="#555" stroke-width="1.1"/><path d="M10.5 3 H13 V6.5" fill="none" stroke="#e8a33d" stroke-width="1.3"/></svg>
<span class="t" style="left:1054.5px;top:456.84px;font-size:12px;color:#444;">(Ctrl)</span>
<svg style="left:1084px;top:461px" width="5" height="3" viewBox="0 0 5 3"><path d="M0 0 H5 L2.5 3 Z" fill="#555"/></svg>
<div class="a" style="left:1348px;top:186px;width:16px;height:502px;background:#e8e8e8;"></div>
<div class="a" style="left:1349px;top:188.5px;width:14px;height:14px;background:#fff;border:1px solid #b0b0b0"></div>
<svg style="left:1352px;top:193px" width="8" height="5" viewBox="0 0 8 5"><path d="M0 4.5 L4 0.3 L8 4.5 Z" fill="#222"/></svg>
<div class="a" style="left:1349px;top:232px;width:14px;height:39.5px;background:#fff;border:1px solid #b0b0b0"></div>
<div class="a" style="left:1349px;top:671.5px;width:14px;height:14px;background:#fff;border:1px solid #b0b0b0"></div>
<svg style="left:1352px;top:676px" width="8" height="5" viewBox="0 0 8 5"><path d="M0 0.3 L4 4.5 L8 0.3 Z" fill="#222"/></svg>
<div class="a" style="left:684px;top:688px;width:680px;height:17px;background:#e8e8e8;"></div>
<div class="a" style="left:700px;top:688px;width:664px;height:17px;background:#f0f0f0;"></div>
<div class="a" style="left:710px;top:689.3px;width:15px;height:14.5px;background:#fff;border:1px solid #b0b0b0"></div>
<svg style="left:715px;top:692.5px" width="5" height="8" viewBox="0 0 5 8"><path d="M4.5 0 L0.3 4 L4.5 8 Z" fill="#222"/></svg>
<div class="a" style="left:742px;top:689.3px;width:464px;height:14.5px;background:#fff;border:1px solid #b0b0b0"></div>
<div class="a" style="left:1331.5px;top:689px;width:14.5px;height:14.5px;background:#fff;border:1px solid #b0b0b0"></div>
<svg style="left:1336.5px;top:692.5px" width="5" height="8" viewBox="0 0 5 8"><path d="M0.3 0 L4.5 4 L0.3 8 Z" fill="#222"/></svg>
<div class="a" style="left:684px;top:705px;width:680px;height:22px;background:#f3f2f1;"></div>
<div class="a" style="left:684px;top:705px;width:680px;height:1px;background:#d6d6d6;"></div>
<span class="t" style="left:691.6px;top:711.29px;font-size:11px;color:#444;">Página 1 de 5</span>
<span class="t" style="left:779.9px;top:711.29px;font-size:11px;color:#444;">1335 palabras</span>
<svg style="left:869px;top:709px" width="17" height="14" viewBox="0 0 17 14"><path d="M7 1 H1 V13 H8 M4 1 H12 V7" fill="none" stroke="#555" stroke-width="1.2"/><path d="M9.5 8.5 L15.5 13.5 M15.5 8.5 L9.5 13.5" stroke="#555" stroke-width="1.2"/></svg>
<svg style="left:949px;top:708px" width="16" height="15" viewBox="0 0 16 15"><path d="M1 4 V1 H4 M12 1 H15 V4 M15 11 V14 H12 M4 14 H1 V11" fill="none" stroke="#555" stroke-width="1.1"/><path d="M4.5 3 H9 L11.5 5.5 V12 H4.5 Z M9 3 V5.5 H11.5" fill="none" stroke="#555" stroke-width="1.1"/></svg>
<span class="t" style="left:967px;top:711.03px;font-size:11.3px;color:#444;">Concentración</span>
<svg style="left:1066px;top:708.5px" width="15" height="13" viewBox="0 0 15 13"><path d="M0.6 1 H6 C6.8 1 7.5 1.6 7.5 2.5 C7.5 1.6 8.2 1 9 1 H14.4 V11.5 H9 C8.2 11.5 7.5 12 7.5 12.5 C7.5 12 6.8 11.5 6 11.5 H0.6 Z M7.5 2.5 V12" fill="none" stroke="#555" stroke-width="1.1"/><path d="M2.5 4 H5.5 M2.5 6.5 H5.5 M9.5 4 H12.5 M9.5 6.5 H12.5" stroke="#555" stroke-width="0.9"/></svg>
<div class="a" style="left:1094px;top:705.5px;width:40px;height:21.5px;background:#d6d4d2;"></div>
<svg style="left:1107px;top:708.5px" width="13" height="14" viewBox="0 0 13 14"><rect x="0.6" y="0.6" width="11.8" height="12.8" fill="none" stroke="#555" stroke-width="1.1"/><path d="M3 3.5 H10 M3 6 H10 M3 8.5 H10 M3 11 H10" stroke="#555" stroke-width="0.9"/></svg>
<svg style="left:1146px;top:708.5px" width="16" height="15" viewBox="0 0 16 15"><path d="M8 13.5 H0.6 V0.6 H11.4 V6" fill="none" stroke="#555" stroke-width="1.1"/><path d="M2.5 3.5 H9.5 M2.5 6 H7 M2.5 8.5 H6" stroke="#555" stroke-width="0.9"/><circle cx="11.5" cy="10.5" r="4" fill="#f3f2f1" stroke="#555" stroke-width="1"/><path d="M7.5 10.5 H15.5 M11.5 6.5 V14.5" stroke="#555" stroke-width="0.8"/></svg>
<div class="a" style="left:1180px;top:715px;width:7.7px;height:1.2px;background:#555;"></div>
<div class="a" style="left:1193.5px;top:715.3px;width:99px;height:1px;background:#666;"></div>
<div class="a" style="left:1241px;top:710.5px;width:5px;height:11.3px;background:#444;"></div>
<div class="a" style="left:1297.4px;top:715px;width:8.3px;height:1.2px;background:#555;"></div>
<div class="a" style="left:1300.95px;top:711px;width:1.2px;height:8.3px;background:#555;"></div>
<span class="t" style="left:1319.6px;top:711.03px;font-size:11.3px;color:#444;transform:scaleX(0.9);transform-origin:0 0;">100%</span>
</div>
</div>
<div id="TB">
<div class="a" style="left:0;top:0;width:1366px;height:41px;background:linear-gradient(to right,#1f313b 0%,#213540 42%,#1f3042 65%,#1b2a45 82%,#182746 100%)"></div>
<svg style="left:16px;top:12.799999999999955px" width="17" height="17" viewBox="0 0 17 17"><path d="M0 2.3 L7 1.3 V7.8 H0 Z M8 1.1 L16.3 0 V7.8 H8 Z M0 8.8 H7 V15.2 L0 14.2 Z M8 8.8 H16.3 V16.5 L8 15.4 Z" fill="#fff"/></svg>
<svg style="left:60px;top:9px" width="24" height="24" viewBox="0 0 24 24"><circle cx="14" cy="9.5" r="7.6" fill="none" stroke="#fff" stroke-width="1.9"/><path d="M8.6 14.9 L2 21.5" stroke="#fff" stroke-width="2.1" stroke-linecap="round"/></svg>
<svg style="left:111px;top:10.5px" width="24" height="21" viewBox="0 0 24 21"><defs><linearGradient id="cpl" x1="0" y1="0" x2="0" y2="1"><stop offset="0" stop-color="#1f8ef0"/><stop offset="0.45" stop-color="#3cc0b0"/><stop offset="0.7" stop-color="#b8d030"/><stop offset="1" stop-color="#ff8a20"/></linearGradient><linearGradient id="cpr" x1="0" y1="0" x2="0.3" y2="1"><stop offset="0" stop-color="#a050f0"/><stop offset="0.5" stop-color="#e050b0"/><stop offset="1" stop-color="#ff7a40"/></linearGradient></defs><path d="M16 0.8 H8.5 C6 0.8 5 2.5 4.5 4.5 L1 14.5 C0.3 17 1.5 18 3.5 18 H6.5 L10 6 C10.8 3 12.5 0.8 16 0.8 Z" fill="url(#cpl)"/><path d="M8 20.2 H15.5 C18 20.2 19 18.5 19.5 16.5 L23 6.5 C23.7 4 22.5 3 20.5 3 H17.5 L14 15 C13.2 18 11.5 20.2 8 20.2 Z" fill="url(#cpr)"/><path d="M16 0.8 C13 0.8 11 2.5 10 6 L6.5 18 C6 19.5 6.5 20.2 8 20.2 C11 20.2 13 18.5 14 15 L17.5 3 C18 1.5 17.5 0.8 16 0.8 Z" fill="#4a60e0" opacity="0.85"/><path d="M6.5 18 H3.5 C5.5 18 6 19.5 8 20.2 Z" fill="#e8403a"/></svg>
<svg style="left:160px;top:9px" width="24" height="23" viewBox="0 0 24 23"><defs><linearGradient id="ieb" x1="0" y1="0" x2="0" y2="1"><stop offset="0" stop-color="#7fe0ff"/><stop offset="1" stop-color="#1a9ee0"/></linearGradient><linearGradient id="iey" x1="0" y1="0" x2="1" y2="1"><stop offset="0" stop-color="#ffe680"/><stop offset="1" stop-color="#d8a400"/></linearGradient></defs><path d="M12.5 4.5 C7.3 4.5 3.5 8.3 3.5 13 C3.5 17.7 7.3 21.5 12.5 21.5 C16.3 21.5 19.2 19.5 20.3 16.5 H15.5 C14.7 17.8 13.7 18.3 12.5 18.3 C10.3 18.3 8.6 16.8 8.3 14.6 H21 C21.1 14.1 21.1 13.6 21.1 13 C21.1 8.3 17.5 4.5 12.5 4.5 Z M8.4 11.5 C8.8 9.3 10.5 7.8 12.5 7.8 C14.6 7.8 16.2 9.3 16.5 11.5 Z" fill="url(#ieb)"/><path d="M2.5 21 C-0.5 18.5 3 9.5 10.5 4.5 C16.5 0.5 22 -0.5 23 1 C23.8 2.3 21.8 5.3 18.5 8" fill="none" stroke="url(#iey)" stroke-width="1.8"/><path d="M2.5 21 C4 22.5 7 22 10 20.5" fill="none" stroke="#e0b020" stroke-width="1.5"/></svg>
<svg style="left:208.5px;top:9px" width="25" height="23" viewBox="0 0 25 23"><defs><linearGradient id="edg" x1="0" y1="0" x2="1" y2="1"><stop offset="0" stop-color="#1fa0e8"/><stop offset="1" stop-color="#0f5fb8"/></linearGradient><linearGradient id="edg2" x1="0" y1="0" x2="1" y2="0.6"><stop offset="0" stop-color="#30b8e0"/><stop offset="1" stop-color="#5ad85a"/></linearGradient></defs><circle cx="12.5" cy="11.5" r="11.2" fill="url(#edg)"/><path d="M1.3 12 C1.3 5 6.5 0.3 12.5 0.3 C19 0.3 23.7 5 23.7 10.5 C23.7 13.5 21.5 15.5 18.5 15.5 C16 15.5 14.8 14 15 12.5 C15.3 10.5 14 8.5 11 8.5 C6 8.5 2.5 11 1.3 12 Z" fill="url(#edg2)"/><path d="M4 8.5 C6 7 9 6.5 11 6.8 C7 7.5 5 11 5.5 14.5 C6 18 9.5 21 13.5 21.5 C8.5 22 3.5 19 2.2 14 C1.8 12 2.5 10 4 8.5 Z" fill="#1256a8" opacity="0.75"/><circle cx="12.2" cy="14" r="3.2" fill="#1c2b38" opacity="0"/></svg>
<svg style="left:257.5px;top:9px" width="25" height="23" viewBox="0 0 25 23"><path d="M8 4 H23 C24 4 24.5 4.5 24.5 5.5 V20.5 C24.5 21.5 24 22.5 23 22.5 H9 C8 22.5 7.5 21.5 7.5 20.5 Z" fill="#28a8ea"/><path d="M7.5 9 L16 15 L24.5 9 V20.5 C24.5 21.5 24 22.5 23 22.5 H9 C8 22.5 7.5 21.5 7.5 20.5 Z" fill="#50d9ff" opacity="0.8"/><path d="M12 0.5 H21 L24.5 4 V9 L16 15 L8 9 V4 Z" fill="#0078d4"/><rect x="0.5" y="6" width="13" height="12.5" rx="1.5" fill="#0a64c0"/><ellipse cx="7" cy="12.25" rx="3.6" ry="4.1" fill="none" stroke="#fff" stroke-width="2"/></svg>
<svg style="left:306.5px;top:8px" width="27" height="27" viewBox="0 0 27 27"><circle cx="12" cy="12" r="11.5" fill="#e33b2e"/><path d="M12 12 L22 6.25 A11.5 11.5 0 0 1 17.75 22 Z" fill="#fbc116"/><path d="M12 12 L17.75 22 A11.5 11.5 0 0 1 1.5 16 L2 6.25 Z" fill="#2da94f"/><path d="M12 12 L2 6.25 A11.5 11.5 0 0 1 22 6.25 Z" fill="#e33b2e"/><circle cx="12" cy="12" r="5.2" fill="#fff"/><circle cx="12" cy="12" r="4.2" fill="#1a73e8"/><circle cx="19.5" cy="19.5" r="6.8" fill="#1a73e8" stroke="#fff" stroke-width="1.4"/><circle cx="19.5" cy="18" r="2.1" fill="none" stroke="#fff" stroke-width="1.2"/><path d="M16 23.5 C16.5 21 18 20.5 19.5 20.5 C21 20.5 22.5 21 23 23.5" fill="none" stroke="#fff" stroke-width="1.2"/></svg>
<svg style="left:356.5px;top:9px" width="24" height="24" viewBox="0 0 24 24"><defs><radialGradient id="ffx" cx="0.7" cy="0.2" r="1"><stop offset="0" stop-color="#ffe226"/><stop offset="0.35" stop-color="#ff9a1f"/><stop offset="0.7" stop-color="#ff3a4a"/><stop offset="1" stop-color="#e31587"/></radialGradient></defs><path d="M21.5 7 C20.5 4.5 18.5 2 16.5 1 C17.5 3 17.8 4.5 17.8 5 C16.5 2.5 14 1.5 12 0.5 C12 2 10.5 3.5 10 4.5 C7 4.5 5 6 4 7 C3.5 5.5 3.5 4 3.8 3 C2 4.5 1 7 0.8 9.5 C0.5 11 0.5 12 0.5 12.5 C0.5 18.5 5.5 23.5 11.8 23.5 C18 23.5 23.2 18.5 23.2 12.3 C23.2 10.5 22.6 8.5 21.5 7 Z" fill="url(#ffx)"/><circle cx="12" cy="13" r="6" fill="#7542e5"/><path d="M6 11 C7 8 10 7 12.5 7.5 C10.5 8.5 9.5 10 10 12 C10.5 14.5 14 15 16 13.5 C16 17 13 19 10 18.5 C7 18 5.5 14.5 6 11 Z" fill="#ff8a30" opacity="0.9"/></svg>
<svg style="left:406px;top:11.5px" width="22" height="19" viewBox="0 0 22 19"><path d="M0.5 2 C0.5 1 1 0.5 2 0.5 H8 L10 2.5 H20 C21 2.5 21.5 3 21.5 4 V17 C21.5 18 21 18.5 20 18.5 H2 C1 18.5 0.5 18 0.5 17 Z" fill="#f5b92a"/><path d="M0.5 5 H21.5 V17 C21.5 18 21 18.5 20 18.5 H2 C1 18.5 0.5 18 0.5 17 Z" fill="#ffd55c"/><path d="M5 18.5 V11 H17 V18.5 H14 V14 H8 V18.5 Z" fill="#2f8ed8"/></svg>
<svg style="left:455px;top:10.5px" width="22" height="21" viewBox="0 0 22 21"><rect x="0.5" y="0.5" width="21" height="20" rx="2.5" fill="#b30b00"/><path d="M4 15.5 C6 13 9.5 6.5 10 4.5 C10.5 2.5 9 2.5 9.3 5 C9.8 8.5 13 12 16.5 12.8 C18.5 13.2 18.2 11.8 16 11.8 C12 11.8 6.5 14 4 15.5 Z" fill="none" stroke="#fff" stroke-width="1.4" stroke-linejoin="round"/></svg>
<div class="a" style="left:491px;top:0px;width:48px;height:41px;background:#3e4e59;"></div>
<svg style="left:502px;top:9px" width="26" height="22" viewBox="0 0 26 22"><rect x="7" y="0.5" width="18.5" height="21" rx="1.5" fill="#41a5ee"/><rect x="7" y="5.7" width="18.5" height="5.3" fill="#2b7cd3"/><rect x="7" y="11" width="18.5" height="5.3" fill="#185abd"/><path d="M7 16.3 H25.5 V20 C25.5 21 25 21.5 24 21.5 H8.5 C7.5 21.5 7 21 7 20 Z" fill="#103f91"/><rect x="0.5" y="5" width="13" height="12.5" rx="1.3" fill="#185abd"/><path d="M2.5 7.8 L4.4 14.8 L6.2 9.8 L8.1 14.8 L10 7.8" fill="none" stroke="#fff" stroke-width="1.5" stroke-linejoin="round"/></svg>
<div class="a" style="left:299px;top:39px;width:40px;height:2px;background:#76b9ed;"></div>
<div class="a" style="left:348px;top:39px;width:40px;height:2px;background:#76b9ed;"></div>
<div class="a" style="left:397px;top:39px;width:40px;height:2px;background:#76b9ed;"></div>
<div class="a" style="left:445.6px;top:39px;width:40.39999999999998px;height:2px;background:#76b9ed;"></div>
<div class="a" style="left:491px;top:39px;width:47.700000000000045px;height:2px;background:#76b9ed;"></div>
<div class="a" style="left:478px;top:39px;width:8px;height:2px;background:#4f7fa0;"></div>
<svg style="left:1123px;top:17.799999999999955px" width="13" height="7" viewBox="0 0 13 7"><path d="M0.8 6.2 L6.5 0.8 L12.2 6.2" fill="none" stroke="#fff" stroke-width="1.3"/></svg>
<svg style="left:1144px;top:14px" width="18" height="14" viewBox="0 0 18 14"><path d="M1 4.5 H4 L8 1 V13 L4 9.5 H1 Z" fill="none" stroke="#fff" stroke-width="1.1" stroke-linejoin="round"/><path d="M10.5 4.5 C11.5 5.5 11.5 8.5 10.5 9.5" fill="none" stroke="#fff" stroke-width="1.1"/><path d="M12.8 2.8 C14.8 4.8 14.8 9.2 12.8 11.2" fill="none" stroke="#fff" stroke-width="1.1"/><path d="M15 1 C17.8 3.8 17.8 10.2 15 13" fill="none" stroke="#8a96a4" stroke-width="1.1"/></svg>
<svg style="left:1171.5px;top:16px" width="13" height="13" viewBox="0 0 13 13"><path d="M0.8 12 A11.2 11.2 0 0 1 12 0.8 M3.2 12 A8.8 8.8 0 0 1 12 3.2 M5.6 12 A6.4 6.4 0 0 1 12 5.6 M8 12 A4 4 0 0 1 12 8" fill="none" stroke="#fff" stroke-width="1.1"/><circle cx="11" cy="11" r="1.5" fill="#fff"/></svg>
<svg style="left:1195px;top:13px" width="13" height="16" viewBox="0 0 13 16"><path d="M2 4 C2 3 3 2.5 4 2.5 H8 C9 2.5 9.5 3 9.5 4 V11 C9.5 12 9 12.5 8 12.5 H4 C3 12.5 2 12 2 11 Z" fill="none" stroke="#fff" stroke-width="1.1"/><path d="M9.5 6 L12.5 4.5 V10.5 L9.5 9" fill="none" stroke="#fff" stroke-width="1.1"/><path d="M3 0.8 C5 0.3 7 0.3 9 0.8 M3 15.2 C5 15.7 7 15.7 9 15.2" fill="none" stroke="#fff" stroke-width="1"/></svg>
<span class="t" style="left:1221.5px;top:15.13px;font-size:11.3px;color:#fff;transform:scaleX(0.8);transform-origin:0 0;">ESP</span>
<span class="t" style="left:1280.5px;top:6.33px;font-size:11.3px;color:#fff;transform:translateX(-50%) scaleX(0.92);transform-origin:50% 0;">9:43</span>
<span class="t" style="left:1281px;top:24.13px;font-size:11.3px;color:#fff;transform:translateX(-50%) scaleX(1.0);transform-origin:50% 0;">28/10/2025</span>
<svg style="left:1325px;top:13.5px" width="18" height="16" viewBox="0 0 18 16"><path d="M0.5 0.5 H15.5 V10 H5 L1.5 13 V10 H0.5 Z" fill="#fff"/><path d="M3 3.5 H13 M3 5.8 H13 M3 8 H10" stroke="#1a2a42" stroke-width="1"/></svg>
<div class="a" style="left:1332px;top:19.600000000000023px;width:17px;height:17px;border-radius:9px;background:#2b2b2b;border:1.3px solid #c8c8c8"></div>
<span class="t" style="left:1340.5px;top:23.19px;font-size:11px;font-weight:bold;color:#fff;transform:translateX(-50%) scaleX(1.0);transform-origin:50% 0;">2</span>
<div class="a" style="left:1361px;top:0px;width:1px;height:41px;background:#53607a;"></div>

</div>
</body></html>
